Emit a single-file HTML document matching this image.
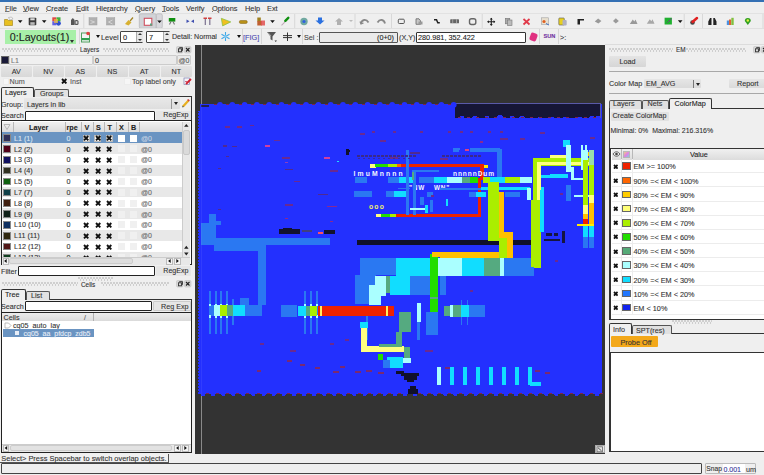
<!DOCTYPE html><html><head><meta charset="utf-8"><style>
html,body{margin:0;padding:0;}
body{width:764px;height:475px;overflow:hidden;position:relative;background:#efefef;font-family:"Liberation Sans",sans-serif;}
.t{position:absolute;white-space:pre;line-height:1;-webkit-text-stroke:0.1px currentColor;}
div{box-sizing:border-box;}
u{text-decoration-thickness:0.5px;text-underline-offset:0px;text-decoration-color:#777;}
</style></head><body>
<div style="position:absolute;left:0px;top:0px;width:764px;height:2px;background:#3470b4"></div>
<div class="t" style="left:5px;top:4.5px;font-size:7.4px;color:#333;"><u>F</u>ile</div>
<div class="t" style="left:23px;top:4.5px;font-size:7.4px;color:#333;"><u>V</u>iew</div>
<div class="t" style="left:46px;top:4.5px;font-size:7.4px;color:#333;"><u>C</u>reate</div>
<div class="t" style="left:76px;top:4.5px;font-size:7.4px;color:#333;"><u>E</u>dit</div>
<div class="t" style="left:96px;top:4.5px;font-size:7.4px;color:#333;">Hie<u>r</u>archy</div>
<div class="t" style="left:135px;top:4.5px;font-size:7.4px;color:#333;"><u>Q</u>uery</div>
<div class="t" style="left:162px;top:4.5px;font-size:7.4px;color:#333;"><u>T</u>ools</div>
<div class="t" style="left:186px;top:4.5px;font-size:7.4px;color:#333;">Verify</div>
<div class="t" style="left:212px;top:4.5px;font-size:7.4px;color:#333;"><u>O</u>ptions</div>
<div class="t" style="left:245px;top:4.5px;font-size:7.4px;color:#333;"><u>H</u>elp</div>
<div class="t" style="left:267px;top:4.5px;font-size:7.4px;color:#333;">Ext</div>
<div style="position:absolute;left:0px;top:13px;width:764px;height:1px;background:#e2e2e2"></div>
<svg style="position:absolute;left:0;top:0" width="764" height="30" viewBox="0 0 764 30"><path d="M4.5 19.5h3l1 1h4v5h-8z" fill="#e8c020" stroke="#a08010" stroke-width=".6"/><path d="M8.5 17.5l3-.5 1.5 2-3 1z" fill="#f4f4f4" stroke="#999" stroke-width=".5"/><path d="M17.9 20.3h4.6l-2.3 2.6z" fill="#111"/><rect x="28.7" y="17.7" width="7.6" height="7.6" rx=".8" fill="#3a3a3a"/><rect x="30.3" y="18.3" width="4.4" height="2" fill="#ddd"/><rect x="30.3" y="22.2" width="4.4" height="2.6" fill="#bbb"/><path d="M41.900000000000006 20.3h4.6l-2.3 2.6z" fill="#111"/><rect x="52.3" y="17.3" width="4" height="4" fill="#e04848"/><rect x="56.5" y="17.3" width="4" height="4" fill="#40b040"/><rect x="52.3" y="21.3" width="4" height="4" fill="#6060e0"/><circle cx="58.5" cy="23.3" r="2.4" fill="#3050d0"/><rect x="54" y="19" width="4" height="4" fill="#f0c040" opacity=".7"/><path d="M71 25v-5l1.8-2 1.8 2v5z" fill="#555"/><rect x="74.5" y="20" width="4" height="5" rx="1.5" fill="#555"/><rect x="75.6" y="21.2" width="1.8" height="2.6" fill="#ddd"/><rect x="83.3" y="14" width="1" height="14" fill="#d8d8d8"/><rect x="89" y="17.7" width="8" height="7.3" fill="#b0b0b0" stroke="#a0a0a0" stroke-width=".5"/><path d="M90.5 20.5l4 1.5-4 1.5" stroke="#ddd" stroke-width=".8" fill="none"/><rect x="106.5" y="17.7" width="8.3" height="7.3" fill="#b0b0b0" stroke="#a0a0a0" stroke-width=".5"/><path d="M112.5 20l-4 2 4 2" stroke="#ddd" stroke-width=".8" fill="none"/><path d="M125 24l3.5-4 3 2.5-3 3z" fill="#d8b030"/><path d="M130 21l3-3.5" stroke="#a08020" stroke-width="1.2"/><rect x="139.3" y="13.8" width="17" height="14.5" rx="1.5" fill="#d2d4d8" stroke="#b4b4b8" stroke-width=".7"/><rect x="156.3" y="13.8" width="6" height="14.5" rx="1.5" fill="#d8d8dc" stroke="#b4b4b8" stroke-width=".7"/><rect x="144.3" y="18.3" width="7.5" height="7" fill="#fff" stroke="#d05060" stroke-width="1.1"/><rect x="150" y="23.5" width="2.2" height="2.2" fill="#60a080"/><path d="M157.2 20.5h4.6l-2.3 2.6z" fill="#111"/><rect x="168.8" y="18" width="6.5" height="3.6" fill="#109010"/><path d="M169.5 24.5l1.5-3m3.5 3l-1.5-3" stroke="#777" stroke-width="1.1"/><path d="M186.5 19.5v3.5l3-1.7zM194 19.5v3.5l-3-1.7z" fill="#4050b0"/><path d="M203.5 18.3h3.5M208 18.3h3.5" stroke="#d04040" stroke-width="1.5"/><path d="M205.3 19v6M209.8 19v6" stroke="#7a7090" stroke-width="1.2"/><path d="M221.3 18.3l9.5 3.6-8.2 4z" fill="#f0c020" stroke="#80c040" stroke-width=".7"/><rect x="239.3" y="20.5" width="8" height="3" rx="1.4" fill="#b89018" stroke="#806010" stroke-width=".5"/><rect x="257.3" y="17.5" width="3.5" height="4" fill="#a08020"/><rect x="257.3" y="21" width="4.5" height="4.5" fill="#c06030"/><rect x="261" y="20.5" width="4" height="5" fill="#e05050" opacity=".85"/><path d="M270.2 20.3h4.6l-2.3 2.6z" fill="#111"/><path d="M281.5 25.3l5-5" stroke="#c0a8b8" stroke-width="1.1"/><path d="M285.3 20.8l3-3" stroke="#109010" stroke-width="2.4" stroke-linecap="round"/><rect x="294.2" y="14" width="1" height="14" fill="#d8d8d8"/><circle cx="304" cy="21.5" r="3.7" fill="#70a8a0"/><circle cx="304" cy="21.5" r="1.6" fill="#3060e0"/><path d="M318 17.5h4v3h2.5l-4.5 4-4.5-4h2.5z" fill="#2a70e0"/><path d="M339 18l4 3.5h-2v3.5h-4v-3.5h-2z" fill="#b0b0b0"/><path d="M349 20.2h4l-2 1.6z" fill="#aaa"/><rect x="354.5" y="14" width="1" height="14" fill="#d8d8d8"/><path d="M361 23.5c1-4 5-5 7.5-1" stroke="#888" stroke-width="1.8" fill="none"/><path d="M360 21.5l1 2.5 2.5-1" stroke="#888" stroke-width="1.2" fill="none"/><path d="M385 23.5c-1-4-5-5-7.5-1" stroke="#888" stroke-width="1.8" fill="none"/><rect x="391" y="14" width="1" height="14" fill="#d8d8d8"/><rect x="398.3" y="19.2" width="6" height="4.3" rx="1" fill="none" stroke="#555" stroke-width="1"/><path d="M416 24.3v-5.5h3l1.5 2v3.5z" fill="#c8c8c8" stroke="#666" stroke-width=".8"/><rect x="418.5" y="21.5" width="4" height="3" fill="#999"/><path d="M434 19.8h2.5l1.3 3h2" stroke="#222" stroke-width="1.5" fill="none"/><rect x="450.2" y="19.3" width="8.8" height="4" rx=".6" fill="#666"/><path d="M452.7 19.3v4M456.5 19.3v4" stroke="#ccc" stroke-width=".6"/><rect x="469.5" y="18.7" width="6.3" height="5.8" rx="2" fill="none" stroke="#666" stroke-width="1.4"/><rect x="481.7" y="14" width="1" height="14" fill="#d8d8d8"/><path d="M491.3 18v7.5M487.5 21.7h7.5" stroke="#222" stroke-width="1.1"/><path d="M491.3 17.8l1.5 1.7h-3zM491.3 25.7l1.5-1.7h-3zM487.3 21.7l1.7-1.5v3zM495.3 21.7l-1.7-1.5v3z" fill="#222"/><rect x="505.3" y="18.3" width="4.5" height="5.5" fill="#aaa" stroke="#777" stroke-width=".6"/><rect x="507.5" y="20" width="4.5" height="5.5" fill="#bbb" stroke="#777" stroke-width=".6"/><path d="M523.5 19l6 5.5M529.5 19l-6 5.5" stroke="#e03848" stroke-width="1.7"/><rect x="541.3" y="17.8" width="7" height="6.5" fill="#e8e0d0" stroke="#a0a0a0" stroke-width=".6"/><circle cx="544" cy="21.5" r="1.6" fill="#e06020"/><path d="M546 23.5l3 1.5" stroke="#4070c0" stroke-width="1"/><rect x="558.8" y="18" width="5.5" height="7" rx=".8" fill="#e8d020" stroke="#555" stroke-width=".6"/><rect x="562.5" y="20" width="4.2" height="5.5" rx="1" fill="#b0b0c0"/><path d="M577.5 24.5v-5.5h6.5v1.5h-4v4z" fill="#222"/><path d="M594.8 21.5l3.3-3 3.3 2.5-3 2.5z" fill="#999"/><path d="M615.8 18.2l3 2.8-3 2.5-2.8-2.5z" fill="#9a9a9a"/><path d="M629.8 24l3-4.5 1.5 2 1.2-2 2 4.5z" fill="#999"/><path d="M646.8 23.8l3-4.5 1.5 2 1.2-2 2 4.5z" fill="#a8a8a8"/><rect x="664.6" y="17.7" width="7.3" height="6.8" fill="#20b030"/><path d="M667.5 22.5l4-4" stroke="#704080" stroke-width="1"/><path d="M677.9000000000001 20.3h4.6l-2.3 2.6z" fill="#111"/><rect x="683.7" y="14" width="1" height="14" fill="#d8d8d8"/><circle cx="692.5" cy="22.5" r="2.3" fill="#444"/><path d="M692.5 22l4.5-4" stroke="#e02020" stroke-width="2.5" stroke-linecap="round"/><rect x="702" y="14" width="1" height="14" fill="#d8d8d8"/><path d="M708.3 25v-3.5l1.7-3.5h1.5v7zM716.5 25v-3.5l-1.7-3.5h-1.5v7z" fill="#222"/><rect x="726.8" y="20.5" width="2.2" height="4.5" fill="#4a90e0"/><rect x="729" y="19.5" width="2.2" height="5.5" fill="#e06030"/><rect x="731.3" y="17.8" width="2.4" height="7.2" fill="#80c040"/><path d="M747.8 25l-3-4a3 3 0 1 1 6 0z" fill="#30a020"/><circle cx="747.8" cy="20.5" r="1.2" fill="#e0f040"/><rect x="762.5" y="14" width="1" height="14" fill="#d8d8d8"/></svg>
<div style="position:absolute;left:0px;top:28px;width:764px;height:1px;background:#e0e0e0"></div>
<div style="position:absolute;left:4.5px;top:30px;width:71.5px;height:14px;background:#a8f0a8"></div>
<div class="t" style="left:9.8px;top:32px;font-size:10.7px;color:#222;">0:Layouts(1)</div>
<div style="position:absolute;left:70px;top:40px;width:0;height:0;border-left:2.5px solid transparent;border-right:2.5px solid transparent;border-top:3px solid #333"></div>
<div style="position:absolute;left:79px;top:29px;width:1px;height:15px;background:#d6d6d6"></div>
<svg style="position:absolute;left:80px;top:30px" width="12" height="14"><rect x="1.5" y="3" width="8" height="9" fill="#f4f4f4" stroke="#50a060" stroke-width="1"/><rect x="1.5" y="8" width="8" height="2.2" fill="#30a050"/><path d="M6.5 2.5h3v3" fill="#e04040"/><circle cx="8" cy="3.5" r="1.7" fill="#e04040"/></svg>
<div style="position:absolute;left:95.5px;top:35px;width:0;height:0;border-left:2.5px solid transparent;border-right:2.5px solid transparent;border-top:3px solid #111"></div>
<div class="t" style="left:101px;top:33.5px;font-size:7.4px;color:#333;">Level</div>
<div style="position:absolute;left:120px;top:31px;width:23px;height:11.5px;background:#fff;border:1px solid #444;border-radius:1px"></div>
<div class="t" style="left:123px;top:34px;font-size:7.4px;color:#222;">0</div>
<div style="position:absolute;left:135.5px;top:31.5px;width:7px;height:10.5px;background:#e6e6e6;border-left:1px solid #aaa"></div>
<div style="position:absolute;left:137.5px;top:32.5px;width:0;height:0;border-left:2px solid transparent;border-right:2px solid transparent;border-bottom:2.5px solid #333"></div>
<div style="position:absolute;left:137.5px;top:38.5px;width:0;height:0;border-left:2px solid transparent;border-right:2px solid transparent;border-top:2.5px solid #333"></div>
<div style="position:absolute;left:146px;top:31px;width:24px;height:11.5px;background:#fff;border:1px solid #444;border-radius:1px"></div>
<div class="t" style="left:149px;top:34px;font-size:7.4px;color:#222;">7</div>
<div style="position:absolute;left:162.5px;top:31.5px;width:7px;height:10.5px;background:#e6e6e6;border-left:1px solid #aaa"></div>
<div style="position:absolute;left:164.5px;top:32.5px;width:0;height:0;border-left:2px solid transparent;border-right:2px solid transparent;border-bottom:2.5px solid #333"></div>
<div style="position:absolute;left:164.5px;top:38.5px;width:0;height:0;border-left:2px solid transparent;border-right:2px solid transparent;border-top:2.5px solid #333"></div>
<div class="t" style="left:172px;top:33.5px;font-size:7.1px;color:#333;">Detail: Normal</div>
<svg style="position:absolute;left:220px;top:31px" width="11" height="11"><path d="M5.5 1v9M1.5 3.2l8 4.6M1.5 7.8l8-4.6" stroke="#40a8e8" stroke-width="1.1"/><circle cx="5.5" cy="5.5" r="1.5" fill="#80c8f0"/></svg>
<div style="position:absolute;left:236.5px;top:35px;width:0;height:0;border-left:2.5px solid transparent;border-right:2.5px solid transparent;border-top:3px solid #111"></div>
<div style="position:absolute;left:242px;top:29px;width:1px;height:15px;background:#d6d6d6"></div>
<div class="t" style="left:243px;top:33.5px;font-size:7.3px;color:#4848b0;">[FIG]</div>
<div style="position:absolute;left:261px;top:29px;width:1px;height:15px;background:#d6d6d6"></div>
<svg style="position:absolute;left:264px;top:29px" width="40" height="16"><path d="M3 3h9l-3.5 4.5v4l-2-1.2v-2.8z" fill="#555"/><path d="M4 3.5l3 3.5" stroke="#ddd" stroke-width=".6"/><path d="M10.5 11.5h2.5l-1.25 1.5z" fill="#333"/><path d="M23.5 3.5v8.5M19 6.6h9M19 8.6h9" stroke="#333" stroke-width="1"/></svg>
<div style="position:absolute;left:297px;top:35px;width:0;height:0;border-left:2.5px solid transparent;border-right:2.5px solid transparent;border-top:3px solid #111"></div>
<div style="position:absolute;left:302px;top:29px;width:1px;height:15px;background:#d6d6d6"></div>
<div class="t" style="left:304px;top:33.5px;font-size:7.2px;color:#444;">Sel :</div>
<div style="position:absolute;left:319px;top:31.5px;width:79px;height:11px;background:#eaeaea;border:1px solid #555;border-radius:1px"></div>
<div class="t" style="left:377px;top:34px;font-size:7.2px;color:#222;">(0+0)</div>
<div class="t" style="left:399px;top:34px;font-size:7.2px;color:#333;">(X,Y)</div>
<div style="position:absolute;left:415.5px;top:31.5px;width:110px;height:11px;background:#fff;border:1.3px solid #333;border-radius:1px"></div>
<div class="t" style="left:418px;top:34px;font-size:7.3px;color:#222;">280.981, 352.422</div>
<div style="position:absolute;left:530px;top:33px;width:7px;height:8px;background:#e03080;border-radius:2px;transform:rotate(20deg)"></div>
<div style="position:absolute;left:539px;top:29px;width:1px;height:15px;background:#d6d6d6"></div>
<div class="t" style="left:543.5px;top:34px;font-size:5.6px;color:#7030a0;font-weight:bold">SUN</div>
<div style="position:absolute;left:558px;top:29px;width:1px;height:15px;background:#d6d6d6"></div>
<div class="t" style="left:560px;top:34px;font-size:7.3px;color:#333;">>:</div>
<div style="position:absolute;left:2px;top:47.5px;width:75px;height:4px;background-image:radial-gradient(circle at 1px 1px,#cecece 0.7px,transparent 1px),radial-gradient(circle at 2.5px 2.8px,#cecece 0.7px,transparent 1px);background-size:3px 4px"></div>
<div class="t" style="left:80px;top:46.8px;font-size:6.4px;color:#333;">Layers</div>
<div style="position:absolute;left:102.8px;top:47.5px;width:66.39999999999999px;height:4px;background-image:radial-gradient(circle at 1px 1px,#cecece 0.7px,transparent 1px),radial-gradient(circle at 2.5px 2.8px,#cecece 0.7px,transparent 1px);background-size:3px 4px"></div>
<svg style="position:absolute;left:175.7px;top:45.5px" width="16" height="8"><rect x="0.5" y="0.5" width="6.5" height="6.5" rx="1.2" fill="#d8d8d8" stroke="#c0c0c0" stroke-width=".6"/><rect x="8.5" y="0.5" width="6.5" height="6.5" rx="1.2" fill="#d8d8d8" stroke="#c0c0c0" stroke-width=".6"/><rect x="2.5" y="2.8" width="3" height="3" fill="none" stroke="#333" stroke-width=".9"/><path d="M3.5 2.2v-.6h3v3h-.6" fill="none" stroke="#333" stroke-width=".9"/><path d="M10 2l3.5 3.5M13.5 2l-3.5 3.5" stroke="#222" stroke-width="1.1"/></svg>
<div style="position:absolute;left:1px;top:55.5px;width:8px;height:8px;background:#1a1a38;border:1px solid #666"></div>
<div style="position:absolute;left:9px;top:55px;width:84px;height:9.5px;background:#f0f0f0;border:1px solid #d0d0d0;border-radius:1px"></div>
<div class="t" style="left:11px;top:57px;font-size:7px;color:#777;">L1</div>
<div style="position:absolute;left:93px;top:55px;width:84px;height:9.5px;background:#eaeaea;border:1px solid #ccc;border-radius:1px"></div>
<div class="t" style="left:95px;top:57px;font-size:7.2px;color:#333;">0</div>
<div style="position:absolute;left:177px;top:55px;width:14px;height:9.5px;background:#eaeaea;border:1px solid #ccc;border-radius:1px"></div>
<div class="t" style="left:178.5px;top:57px;font-size:7px;color:#555;">@0</div>
<div style="position:absolute;left:1px;top:66px;width:30.5px;height:10.5px;background:linear-gradient(#e4e4e4,#d8d8d8);border-radius:1px"></div>
<div class="t" style="left:16.25px;top:68.2px;font-size:7.2px;color:#333;transform:translateX(-50%)">AV</div>
<div style="position:absolute;left:33px;top:66px;width:30.5px;height:10.5px;background:linear-gradient(#e4e4e4,#d8d8d8);border-radius:1px"></div>
<div class="t" style="left:48.25px;top:68.2px;font-size:7.2px;color:#333;transform:translateX(-50%)">NV</div>
<div style="position:absolute;left:65px;top:66px;width:30.5px;height:10.5px;background:linear-gradient(#e4e4e4,#d8d8d8);border-radius:1px"></div>
<div class="t" style="left:80.25px;top:68.2px;font-size:7.2px;color:#333;transform:translateX(-50%)">AS</div>
<div style="position:absolute;left:97px;top:66px;width:30.5px;height:10.5px;background:linear-gradient(#e4e4e4,#d8d8d8);border-radius:1px"></div>
<div class="t" style="left:112.25px;top:68.2px;font-size:7.2px;color:#333;transform:translateX(-50%)">NS</div>
<div style="position:absolute;left:129px;top:66px;width:30.5px;height:10.5px;background:linear-gradient(#e4e4e4,#d8d8d8);border-radius:1px"></div>
<div class="t" style="left:144.25px;top:68.2px;font-size:7.2px;color:#333;transform:translateX(-50%)">AT</div>
<div style="position:absolute;left:161px;top:66px;width:30.5px;height:10.5px;background:linear-gradient(#e4e4e4,#d8d8d8);border-radius:1px"></div>
<div class="t" style="left:176.25px;top:68.2px;font-size:7.2px;color:#333;transform:translateX(-50%)">NT</div>
<div style="position:absolute;left:2.5px;top:78px;width:6.5px;height:6.5px;background:#f6f6f6;border:1px solid #ececec"></div>
<div class="t" style="left:9.5px;top:78px;font-size:7.2px;color:#555;">Num</div>
<svg style="position:absolute;left:61.3px;top:78.1px" width="6.4" height="6.4"><path d="M1 1L5.4 5.4M5.4 1L1 5.4" stroke="#111" stroke-width="1.9"/></svg>
<div class="t" style="left:70px;top:78px;font-size:7.2px;color:#555;">Inst</div>
<div style="position:absolute;left:124px;top:78px;width:6.5px;height:6.5px;background:#f6f6f6;border:1px solid #ececec"></div>
<div class="t" style="left:132px;top:78px;font-size:7.2px;color:#444;">Top label only</div>
<svg style="position:absolute;left:183px;top:77px" width="10" height="9"><rect x="1" y="1" width="5.5" height="6.5" fill="#f4f4f8" stroke="#8080b0" stroke-width=".7"/><path d="M3 7l5-5" stroke="#d02030" stroke-width="1.8"/><path d="M2 4.5h2" stroke="#c04060" stroke-width=".8"/></svg>
<div style="position:absolute;left:1px;top:96px;width:191px;height:1.3px;background:#333"></div>
<div style="position:absolute;left:34px;top:88.5px;width:35px;height:8px;background:#e2e2e2;border:1px solid #555;border-bottom:none;border-radius:2px 2px 0 0"></div>
<div class="t" style="left:40px;top:89.5px;font-size:7.2px;color:#333;">Groups</div>
<div style="position:absolute;left:1px;top:86.5px;width:33px;height:10.5px;background:#efefef;border:1.3px solid #333;border-bottom:none;border-radius:2px 2px 0 0"></div>
<div class="t" style="left:5px;top:89px;font-size:7.2px;color:#222;">Layers</div>
<div style="position:absolute;left:1px;top:96px;width:1.3px;height:25px;background:#333"></div>
<div style="position:absolute;left:190.5px;top:96px;width:1.3px;height:25px;background:#333"></div>
<div class="t" style="left:1px;top:100.5px;font-size:7.2px;color:#333;">Group:</div>
<div style="position:absolute;left:24px;top:98px;width:156px;height:11px;background:linear-gradient(#e8e8e8,#dedede);border-radius:1px"></div>
<div class="t" style="left:27px;top:100.5px;font-size:7.2px;color:#333;">Layers in lib</div>
<div style="position:absolute;left:171.3px;top:98.5px;width:1.2px;height:10px;background:#999"></div>
<div style="position:absolute;left:174px;top:102.3px;width:0;height:0;border-left:2.5px solid transparent;border-right:2.5px solid transparent;border-top:3px solid #222"></div>
<svg style="position:absolute;left:180px;top:97px" width="12" height="12"><path d="M3 9.5l5.5-6" stroke="#e8b020" stroke-width="2.2"/><path d="M8 3.8l1-1.2" stroke="#d04040" stroke-width="2.2"/><path d="M2.5 10.3l.8-1.3" stroke="#555" stroke-width="1.2"/></svg>
<div class="t" style="left:1px;top:112px;font-size:7.2px;color:#333;">Search</div>
<div style="position:absolute;left:25px;top:110.5px;width:129.5px;height:10px;background:#fff;border:1.3px solid #222;border-radius:1px"></div>
<div style="position:absolute;left:156px;top:110.5px;width:35px;height:10px;background:#e6e6e6;border-radius:1px"></div>
<div class="t" style="left:163.3px;top:112px;font-size:7.1px;color:#333;">RegExp</div>
<div style="position:absolute;left:1px;top:120.3px;width:190.5px;height:145px;background:#fff;border:1.3px solid #222;border-right-width:1px"></div>
<div style="position:absolute;left:2.3px;top:121.5px;width:180px;height:10.5px;background:linear-gradient(#f0f0f0,#dcdcdc)"></div>
<div style="position:absolute;left:13px;top:122px;width:1px;height:10px;background:#b8b8b8"></div>
<div style="position:absolute;left:65px;top:122px;width:1px;height:10px;background:#b8b8b8"></div>
<div style="position:absolute;left:81px;top:122px;width:1px;height:10px;background:#b8b8b8"></div>
<div style="position:absolute;left:92.5px;top:122px;width:1px;height:10px;background:#b8b8b8"></div>
<div style="position:absolute;left:104px;top:122px;width:1px;height:10px;background:#b8b8b8"></div>
<div style="position:absolute;left:116px;top:122px;width:1px;height:10px;background:#b8b8b8"></div>
<div style="position:absolute;left:128px;top:122px;width:1px;height:10px;background:#b8b8b8"></div>
<div style="position:absolute;left:139px;top:122px;width:1px;height:10px;background:#b8b8b8"></div>
<svg style="position:absolute;left:3px;top:123px" width="8" height="8"><path d="M1 1.5h6l-3 5z" fill="none" stroke="#aaa" stroke-width=".8"/></svg>
<div class="t" style="left:29px;top:123.8px;font-size:7.2px;color:#222;font-weight:bold">Layer</div>
<div class="t" style="left:66.5px;top:123.8px;font-size:7.2px;color:#222;font-weight:bold">rpe</div>
<div class="t" style="left:84.5px;top:123.8px;font-size:7.2px;color:#222;font-weight:bold">V</div>
<div class="t" style="left:96px;top:123.8px;font-size:7.2px;color:#222;font-weight:bold">S</div>
<div class="t" style="left:107.5px;top:123.8px;font-size:7.2px;color:#222;font-weight:bold">T</div>
<div class="t" style="left:119px;top:123.8px;font-size:7.2px;color:#222;font-weight:bold">X</div>
<div class="t" style="left:131px;top:123.8px;font-size:7.2px;color:#222;font-weight:bold">B</div>
<div style="position:absolute;left:2.3px;top:132.4px;width:180px;height:124.6px;overflow:hidden">
<div style="position:absolute;left:0px;top:0.0px;width:180px;height:10.85px;background:#6a94c2"><div style="position:absolute;left:1px;top:2px;width:8px;height:7.5px;background:#303058;border:1px solid #888"></div></div>
<div class="t" style="left:11.7px;top:2.3px;font-size:7.2px;color:#dde6f2;">L1 (1)</div>
<div class="t" style="left:64.2px;top:2.3px;font-size:7.2px;color:#dde6f2;">0</div>
<div style="position:absolute;left:80.4px;top:2.2px;width:7.2px;height:7px;background:#fff;border:1px solid #bbb"></div>
<svg style="position:absolute;left:80.75px;top:2.85px" width="6.3" height="6.3"><path d="M1 1L5.3 5.3M5.3 1L1 5.3" stroke="#111" stroke-width="1.9"/></svg>
<div style="position:absolute;left:91.9px;top:2.2px;width:7.2px;height:7px;background:#fff;border:1px solid #bbb"></div>
<svg style="position:absolute;left:92.25px;top:2.85px" width="6.3" height="6.3"><path d="M1 1L5.3 5.3M5.3 1L1 5.3" stroke="#111" stroke-width="1.9"/></svg>
<div style="position:absolute;left:103.4px;top:2.2px;width:7.2px;height:7px;background:#fff;border:1px solid #bbb"></div>
<svg style="position:absolute;left:103.75px;top:2.85px" width="6.3" height="6.3"><path d="M1 1L5.3 5.3M5.3 1L1 5.3" stroke="#111" stroke-width="1.9"/></svg>
<div style="position:absolute;left:115.5px;top:2.2px;width:7px;height:7px;background:#fff"></div>
<div style="position:absolute;left:127.49999999999999px;top:2.2px;width:7px;height:7px;background:#fff"></div>
<div class="t" style="left:138.7px;top:2.3px;font-size:7px;color:#c8d4e4;">@0</div>
<div style="position:absolute;left:0px;top:10.85px;width:180px;height:10.85px;background:#e8e8e8"><div style="position:absolute;left:1px;top:2px;width:8px;height:7.5px;background:#500018;border:1px solid #888"></div></div>
<div class="t" style="left:11.7px;top:13.149999999999999px;font-size:7.2px;color:#333;">L2 (2)</div>
<div class="t" style="left:64.2px;top:13.149999999999999px;font-size:7.2px;color:#333;">0</div>
<svg style="position:absolute;left:80.75px;top:13.700000000000001px" width="6.3" height="6.3"><path d="M1 1L5.3 5.3M5.3 1L1 5.3" stroke="#111" stroke-width="1.9"/></svg>
<svg style="position:absolute;left:92.25px;top:13.700000000000001px" width="6.3" height="6.3"><path d="M1 1L5.3 5.3M5.3 1L1 5.3" stroke="#111" stroke-width="1.9"/></svg>
<svg style="position:absolute;left:103.75px;top:13.700000000000001px" width="6.3" height="6.3"><path d="M1 1L5.3 5.3M5.3 1L1 5.3" stroke="#111" stroke-width="1.9"/></svg>
<div style="position:absolute;left:115.5px;top:13.05px;width:7px;height:7px;background:#f0f0f0"></div>
<div style="position:absolute;left:127.49999999999999px;top:13.05px;width:7px;height:7px;background:#f0f0f0"></div>
<div class="t" style="left:138.7px;top:13.149999999999999px;font-size:7px;color:#666;">@0</div>
<div style="position:absolute;left:0px;top:21.7px;width:180px;height:10.85px;background:#ffffff"><div style="position:absolute;left:1px;top:2px;width:8px;height:7.5px;background:#101060;border:1px solid #888"></div></div>
<div class="t" style="left:11.7px;top:24.0px;font-size:7.2px;color:#333;">L3 (3)</div>
<div class="t" style="left:64.2px;top:24.0px;font-size:7.2px;color:#333;">0</div>
<svg style="position:absolute;left:80.75px;top:24.55px" width="6.3" height="6.3"><path d="M1 1L5.3 5.3M5.3 1L1 5.3" stroke="#111" stroke-width="1.9"/></svg>
<svg style="position:absolute;left:92.25px;top:24.55px" width="6.3" height="6.3"><path d="M1 1L5.3 5.3M5.3 1L1 5.3" stroke="#111" stroke-width="1.9"/></svg>
<svg style="position:absolute;left:103.75px;top:24.55px" width="6.3" height="6.3"><path d="M1 1L5.3 5.3M5.3 1L1 5.3" stroke="#111" stroke-width="1.9"/></svg>
<div style="position:absolute;left:115.5px;top:23.9px;width:7px;height:7px;background:#f0f0f0"></div>
<div style="position:absolute;left:127.49999999999999px;top:23.9px;width:7px;height:7px;background:#f0f0f0"></div>
<div class="t" style="left:138.7px;top:24.0px;font-size:7px;color:#666;">@0</div>
<div style="position:absolute;left:0px;top:32.55px;width:180px;height:10.85px;background:#e8e8e8"><div style="position:absolute;left:1px;top:2px;width:8px;height:7.5px;background:#303020;border:1px solid #888"></div></div>
<div class="t" style="left:11.7px;top:34.849999999999994px;font-size:7.2px;color:#333;">L4 (4)</div>
<div class="t" style="left:64.2px;top:34.849999999999994px;font-size:7.2px;color:#333;">0</div>
<svg style="position:absolute;left:80.75px;top:35.4px" width="6.3" height="6.3"><path d="M1 1L5.3 5.3M5.3 1L1 5.3" stroke="#111" stroke-width="1.9"/></svg>
<svg style="position:absolute;left:92.25px;top:35.4px" width="6.3" height="6.3"><path d="M1 1L5.3 5.3M5.3 1L1 5.3" stroke="#111" stroke-width="1.9"/></svg>
<svg style="position:absolute;left:103.75px;top:35.4px" width="6.3" height="6.3"><path d="M1 1L5.3 5.3M5.3 1L1 5.3" stroke="#111" stroke-width="1.9"/></svg>
<div style="position:absolute;left:115.5px;top:34.75px;width:7px;height:7px;background:#f0f0f0"></div>
<div style="position:absolute;left:127.49999999999999px;top:34.75px;width:7px;height:7px;background:#f0f0f0"></div>
<div class="t" style="left:138.7px;top:34.849999999999994px;font-size:7px;color:#666;">@0</div>
<div style="position:absolute;left:0px;top:43.4px;width:180px;height:10.85px;background:#ffffff"><div style="position:absolute;left:1px;top:2px;width:8px;height:7.5px;background:#106010;border:1px solid #888"></div></div>
<div class="t" style="left:11.7px;top:45.699999999999996px;font-size:7.2px;color:#333;">L5 (5)</div>
<div class="t" style="left:64.2px;top:45.699999999999996px;font-size:7.2px;color:#333;">0</div>
<svg style="position:absolute;left:80.75px;top:46.25px" width="6.3" height="6.3"><path d="M1 1L5.3 5.3M5.3 1L1 5.3" stroke="#111" stroke-width="1.9"/></svg>
<svg style="position:absolute;left:92.25px;top:46.25px" width="6.3" height="6.3"><path d="M1 1L5.3 5.3M5.3 1L1 5.3" stroke="#111" stroke-width="1.9"/></svg>
<svg style="position:absolute;left:103.75px;top:46.25px" width="6.3" height="6.3"><path d="M1 1L5.3 5.3M5.3 1L1 5.3" stroke="#111" stroke-width="1.9"/></svg>
<div style="position:absolute;left:115.5px;top:45.6px;width:7px;height:7px;background:#f0f0f0"></div>
<div style="position:absolute;left:127.49999999999999px;top:45.6px;width:7px;height:7px;background:#f0f0f0"></div>
<div class="t" style="left:138.7px;top:45.699999999999996px;font-size:7px;color:#666;">@0</div>
<div style="position:absolute;left:0px;top:54.25px;width:180px;height:10.85px;background:#e8e8e8"><div style="position:absolute;left:1px;top:2px;width:8px;height:7.5px;background:#104048;border:1px solid #888"></div></div>
<div class="t" style="left:11.7px;top:56.55px;font-size:7.2px;color:#333;">L7 (7)</div>
<div class="t" style="left:64.2px;top:56.55px;font-size:7.2px;color:#333;">0</div>
<svg style="position:absolute;left:80.75px;top:57.1px" width="6.3" height="6.3"><path d="M1 1L5.3 5.3M5.3 1L1 5.3" stroke="#111" stroke-width="1.9"/></svg>
<svg style="position:absolute;left:92.25px;top:57.1px" width="6.3" height="6.3"><path d="M1 1L5.3 5.3M5.3 1L1 5.3" stroke="#111" stroke-width="1.9"/></svg>
<svg style="position:absolute;left:103.75px;top:57.1px" width="6.3" height="6.3"><path d="M1 1L5.3 5.3M5.3 1L1 5.3" stroke="#111" stroke-width="1.9"/></svg>
<div style="position:absolute;left:115.5px;top:56.45px;width:7px;height:7px;background:#f0f0f0"></div>
<div style="position:absolute;left:127.49999999999999px;top:56.45px;width:7px;height:7px;background:#f0f0f0"></div>
<div class="t" style="left:138.7px;top:56.55px;font-size:7px;color:#666;">@0</div>
<div style="position:absolute;left:0px;top:65.1px;width:180px;height:10.85px;background:#ffffff"><div style="position:absolute;left:1px;top:2px;width:8px;height:7.5px;background:#402010;border:1px solid #888"></div></div>
<div class="t" style="left:11.7px;top:67.39999999999999px;font-size:7.2px;color:#333;">L8 (8)</div>
<div class="t" style="left:64.2px;top:67.39999999999999px;font-size:7.2px;color:#333;">0</div>
<svg style="position:absolute;left:80.75px;top:67.94999999999999px" width="6.3" height="6.3"><path d="M1 1L5.3 5.3M5.3 1L1 5.3" stroke="#111" stroke-width="1.9"/></svg>
<svg style="position:absolute;left:92.25px;top:67.94999999999999px" width="6.3" height="6.3"><path d="M1 1L5.3 5.3M5.3 1L1 5.3" stroke="#111" stroke-width="1.9"/></svg>
<svg style="position:absolute;left:103.75px;top:67.94999999999999px" width="6.3" height="6.3"><path d="M1 1L5.3 5.3M5.3 1L1 5.3" stroke="#111" stroke-width="1.9"/></svg>
<div style="position:absolute;left:115.5px;top:67.3px;width:7px;height:7px;background:#f0f0f0"></div>
<div style="position:absolute;left:127.49999999999999px;top:67.3px;width:7px;height:7px;background:#f0f0f0"></div>
<div class="t" style="left:138.7px;top:67.39999999999999px;font-size:7px;color:#666;">@0</div>
<div style="position:absolute;left:0px;top:75.95px;width:180px;height:10.85px;background:#e8e8e8"><div style="position:absolute;left:1px;top:2px;width:8px;height:7.5px;background:#102018;border:1px solid #888"></div></div>
<div class="t" style="left:11.7px;top:78.25px;font-size:7.2px;color:#333;">L9 (9)</div>
<div class="t" style="left:64.2px;top:78.25px;font-size:7.2px;color:#333;">0</div>
<svg style="position:absolute;left:80.75px;top:78.8px" width="6.3" height="6.3"><path d="M1 1L5.3 5.3M5.3 1L1 5.3" stroke="#111" stroke-width="1.9"/></svg>
<svg style="position:absolute;left:92.25px;top:78.8px" width="6.3" height="6.3"><path d="M1 1L5.3 5.3M5.3 1L1 5.3" stroke="#111" stroke-width="1.9"/></svg>
<svg style="position:absolute;left:103.75px;top:78.8px" width="6.3" height="6.3"><path d="M1 1L5.3 5.3M5.3 1L1 5.3" stroke="#111" stroke-width="1.9"/></svg>
<div style="position:absolute;left:115.5px;top:78.15px;width:7px;height:7px;background:#f0f0f0"></div>
<div style="position:absolute;left:127.49999999999999px;top:78.15px;width:7px;height:7px;background:#f0f0f0"></div>
<div class="t" style="left:138.7px;top:78.25px;font-size:7px;color:#666;">@0</div>
<div style="position:absolute;left:0px;top:86.8px;width:180px;height:10.85px;background:#ffffff"><div style="position:absolute;left:1px;top:2px;width:8px;height:7.5px;background:#103060;border:1px solid #888"></div></div>
<div class="t" style="left:11.7px;top:89.1px;font-size:7.2px;color:#333;">L10 (10)</div>
<div class="t" style="left:64.2px;top:89.1px;font-size:7.2px;color:#333;">0</div>
<svg style="position:absolute;left:80.75px;top:89.64999999999999px" width="6.3" height="6.3"><path d="M1 1L5.3 5.3M5.3 1L1 5.3" stroke="#111" stroke-width="1.9"/></svg>
<svg style="position:absolute;left:92.25px;top:89.64999999999999px" width="6.3" height="6.3"><path d="M1 1L5.3 5.3M5.3 1L1 5.3" stroke="#111" stroke-width="1.9"/></svg>
<svg style="position:absolute;left:103.75px;top:89.64999999999999px" width="6.3" height="6.3"><path d="M1 1L5.3 5.3M5.3 1L1 5.3" stroke="#111" stroke-width="1.9"/></svg>
<div style="position:absolute;left:115.5px;top:89.0px;width:7px;height:7px;background:#f0f0f0"></div>
<div style="position:absolute;left:127.49999999999999px;top:89.0px;width:7px;height:7px;background:#f0f0f0"></div>
<div class="t" style="left:138.7px;top:89.1px;font-size:7px;color:#666;">@0</div>
<div style="position:absolute;left:0px;top:97.64999999999999px;width:180px;height:10.85px;background:#e8e8e8"><div style="position:absolute;left:1px;top:2px;width:8px;height:7.5px;background:#302810;border:1px solid #888"></div></div>
<div class="t" style="left:11.7px;top:99.94999999999999px;font-size:7.2px;color:#333;">L11 (11)</div>
<div class="t" style="left:64.2px;top:99.94999999999999px;font-size:7.2px;color:#333;">0</div>
<svg style="position:absolute;left:80.75px;top:100.49999999999999px" width="6.3" height="6.3"><path d="M1 1L5.3 5.3M5.3 1L1 5.3" stroke="#111" stroke-width="1.9"/></svg>
<svg style="position:absolute;left:92.25px;top:100.49999999999999px" width="6.3" height="6.3"><path d="M1 1L5.3 5.3M5.3 1L1 5.3" stroke="#111" stroke-width="1.9"/></svg>
<svg style="position:absolute;left:103.75px;top:100.49999999999999px" width="6.3" height="6.3"><path d="M1 1L5.3 5.3M5.3 1L1 5.3" stroke="#111" stroke-width="1.9"/></svg>
<div style="position:absolute;left:115.5px;top:99.85px;width:7px;height:7px;background:#f0f0f0"></div>
<div style="position:absolute;left:127.49999999999999px;top:99.85px;width:7px;height:7px;background:#f0f0f0"></div>
<div class="t" style="left:138.7px;top:99.94999999999999px;font-size:7px;color:#666;">@0</div>
<div style="position:absolute;left:0px;top:108.5px;width:180px;height:10.85px;background:#ffffff"><div style="position:absolute;left:1px;top:2px;width:8px;height:7.5px;background:#501818;border:1px solid #888"></div></div>
<div class="t" style="left:11.7px;top:110.8px;font-size:7.2px;color:#333;">L12 (12)</div>
<div class="t" style="left:64.2px;top:110.8px;font-size:7.2px;color:#333;">0</div>
<svg style="position:absolute;left:80.75px;top:111.35px" width="6.3" height="6.3"><path d="M1 1L5.3 5.3M5.3 1L1 5.3" stroke="#111" stroke-width="1.9"/></svg>
<svg style="position:absolute;left:92.25px;top:111.35px" width="6.3" height="6.3"><path d="M1 1L5.3 5.3M5.3 1L1 5.3" stroke="#111" stroke-width="1.9"/></svg>
<svg style="position:absolute;left:103.75px;top:111.35px" width="6.3" height="6.3"><path d="M1 1L5.3 5.3M5.3 1L1 5.3" stroke="#111" stroke-width="1.9"/></svg>
<div style="position:absolute;left:115.5px;top:110.7px;width:7px;height:7px;background:#f0f0f0"></div>
<div style="position:absolute;left:127.49999999999999px;top:110.7px;width:7px;height:7px;background:#f0f0f0"></div>
<div class="t" style="left:138.7px;top:110.8px;font-size:7px;color:#666;">@0</div>
<div style="position:absolute;left:0px;top:119.35px;width:180px;height:10.85px;background:#e8e8e8"><div style="position:absolute;left:1px;top:2px;width:8px;height:7.5px;background:#104020;border:1px solid #888"></div></div>
<div class="t" style="left:11.7px;top:121.64999999999999px;font-size:7.2px;color:#333;">L13 (13)</div>
<div class="t" style="left:64.2px;top:121.64999999999999px;font-size:7.2px;color:#333;">0</div>
<svg style="position:absolute;left:80.75px;top:122.19999999999999px" width="6.3" height="6.3"><path d="M1 1L5.3 5.3M5.3 1L1 5.3" stroke="#111" stroke-width="1.9"/></svg>
<svg style="position:absolute;left:92.25px;top:122.19999999999999px" width="6.3" height="6.3"><path d="M1 1L5.3 5.3M5.3 1L1 5.3" stroke="#111" stroke-width="1.9"/></svg>
<svg style="position:absolute;left:103.75px;top:122.19999999999999px" width="6.3" height="6.3"><path d="M1 1L5.3 5.3M5.3 1L1 5.3" stroke="#111" stroke-width="1.9"/></svg>
<div style="position:absolute;left:115.5px;top:121.55px;width:7px;height:7px;background:#f0f0f0"></div>
<div style="position:absolute;left:127.49999999999999px;top:121.55px;width:7px;height:7px;background:#f0f0f0"></div>
<div class="t" style="left:138.7px;top:121.64999999999999px;font-size:7px;color:#666;">@0</div>
</div>
<div style="position:absolute;left:182.3px;top:121.5px;width:8px;height:136px;background:#e8e8e8;border-left:1px solid #ccc"></div>
<div style="position:absolute;left:183px;top:130px;width:7px;height:25px;background:#dadada;border:1px solid #c8c8c8;border-radius:2px"></div>
<svg style="position:absolute;left:0;top:0;overflow:visible" width="1" height="1"><path d="M184.05 126.85L188.55 126.85L186.3 123.925z" fill="#222"/></svg>
<svg style="position:absolute;left:0;top:0;overflow:visible" width="1" height="1"><path d="M184.05 248.65L188.55 248.65L186.3 245.72500000000002z" fill="#222"/></svg>
<svg style="position:absolute;left:0;top:0;overflow:visible" width="1" height="1"><path d="M184.05 252.45000000000002L188.55 252.45000000000002L186.3 255.375z" fill="#222"/></svg>
<div style="position:absolute;left:2.3px;top:257px;width:188px;height:7.5px;background:#e8e8e8;border-top:1px solid #ccc"></div>
<div style="position:absolute;left:2.5px;top:257.5px;width:6px;height:7px;background:#f4f4f4;border:1px solid #bbb"></div>
<svg style="position:absolute;left:0;top:0;overflow:visible" width="1" height="1"><path d="M6.7 259.0L6.7 263.0L4.1 261z" fill="#111"/></svg>
<div style="position:absolute;left:9px;top:258px;width:124px;height:6px;background:#dedede;border:1px solid #ccc;border-radius:2px"></div>
<div style="position:absolute;left:166px;top:257.5px;width:7px;height:7px;background:#f4f4f4;border:1px solid #bbb"></div>
<div style="position:absolute;left:174px;top:257.5px;width:7px;height:7px;background:#f4f4f4;border:1px solid #bbb"></div>
<svg style="position:absolute;left:0;top:0;overflow:visible" width="1" height="1"><path d="M170.7 259.0L170.7 263.0L168.1 261z" fill="#111"/></svg>
<svg style="position:absolute;left:0;top:0;overflow:visible" width="1" height="1"><path d="M176.3 259.0L176.3 263.0L178.9 261z" fill="#111"/></svg>
<div class="t" style="left:1px;top:268px;font-size:7.2px;color:#333;">Filter</div>
<div style="position:absolute;left:18px;top:265.5px;width:136.5px;height:10.5px;background:#fff;border:1.3px solid #222;border-radius:1px"></div>
<div style="position:absolute;left:156px;top:266px;width:35px;height:10px;background:#e6e6e6;border-radius:1px"></div>
<div class="t" style="left:163.3px;top:268px;font-size:7.1px;color:#333;">RegExp</div>
<div style="position:absolute;left:78px;top:276.5px;width:35px;height:4px;background-image:radial-gradient(circle at 1px 1px,#cecece 0.7px,transparent 1px),radial-gradient(circle at 2.5px 2.8px,#cecece 0.7px,transparent 1px);background-size:3px 4px"></div>
<div style="position:absolute;left:2px;top:282.2px;width:76px;height:4px;background-image:radial-gradient(circle at 1px 1px,#cecece 0.7px,transparent 1px),radial-gradient(circle at 2.5px 2.8px,#cecece 0.7px,transparent 1px);background-size:3px 4px"></div>
<div class="t" style="left:81px;top:281.5px;font-size:6.4px;color:#333;">Cells</div>
<div style="position:absolute;left:100.5px;top:282.2px;width:68.69999999999999px;height:4px;background-image:radial-gradient(circle at 1px 1px,#cecece 0.7px,transparent 1px),radial-gradient(circle at 2.5px 2.8px,#cecece 0.7px,transparent 1px);background-size:3px 4px"></div>
<svg style="position:absolute;left:175.7px;top:280.2px" width="16" height="8"><rect x="0.5" y="0.5" width="6.5" height="6.5" rx="1.2" fill="#d8d8d8" stroke="#c0c0c0" stroke-width=".6"/><rect x="8.5" y="0.5" width="6.5" height="6.5" rx="1.2" fill="#d8d8d8" stroke="#c0c0c0" stroke-width=".6"/><rect x="2.5" y="2.8" width="3" height="3" fill="none" stroke="#333" stroke-width=".9"/><path d="M3.5 2.2v-.6h3v3h-.6" fill="none" stroke="#333" stroke-width=".9"/><path d="M10 2l3.5 3.5M13.5 2l-3.5 3.5" stroke="#222" stroke-width="1.1"/></svg>
<div style="position:absolute;left:1px;top:299px;width:191px;height:1.3px;background:#333"></div>
<div style="position:absolute;left:26px;top:290.5px;width:24px;height:9px;background:#e2e2e2;border:1px solid #555;border-bottom:none;border-radius:2px 2px 0 0"></div>
<div class="t" style="left:31px;top:292px;font-size:7.2px;color:#333;">List</div>
<div style="position:absolute;left:1px;top:288.5px;width:25px;height:11.5px;background:#efefef;border:1.3px solid #333;border-bottom:none;border-radius:2px 2px 0 0"></div>
<div class="t" style="left:5px;top:291px;font-size:7.2px;color:#222;">Tree</div>
<div style="position:absolute;left:1px;top:299px;width:1.3px;height:154px;background:#333"></div>
<div style="position:absolute;left:190.5px;top:299px;width:1.3px;height:13px;background:#333"></div>
<div class="t" style="left:1px;top:303px;font-size:7.2px;color:#333;">Search</div>
<div style="position:absolute;left:25px;top:300.5px;width:127px;height:10px;background:#fff;border:1.3px solid #222;border-radius:1px"></div>
<div style="position:absolute;left:153px;top:300.5px;width:38px;height:10px;background:#e6e6e6;border:1px solid #ccc;border-radius:1px"></div>
<div class="t" style="left:161px;top:303px;font-size:7.2px;color:#333;">Reg Exp</div>
<div style="position:absolute;left:1px;top:311.5px;width:191px;height:141.5px;background:#fff;border:1.3px solid #222"></div>
<div style="position:absolute;left:2.3px;top:312.8px;width:188.5px;height:8.5px;background:linear-gradient(#ececec,#dadada)"></div>
<div style="position:absolute;left:93px;top:313px;width:1px;height:8px;background:#b0b0b0"></div>
<div class="t" style="left:3.5px;top:314px;font-size:7.2px;color:#333;">Cells</div>
<div class="t" style="left:84px;top:313.5px;font-size:7px;color:#555;">/</div>
<svg style="position:absolute;left:4px;top:322px" width="8" height="7"><path d="M1 1h3.5l2.5 2.5-2.5 2.5h-3.5z" fill="none" stroke="#aaa" stroke-width=".8"/></svg>
<div class="t" style="left:13px;top:322.2px;font-size:7.2px;color:#333;">cq05_auto_lay</div>
<div style="position:absolute;left:3px;top:329px;width:90.5px;height:7.5px;background:#6a94c2"></div>
<div style="position:absolute;left:15px;top:330.8px;width:4px;height:4px;background:#e8eef8"></div>
<div class="t" style="left:23.5px;top:330px;font-size:7px;color:#e8eef8;">cq05_aa_pfdcp_zdb5</div>
<div style="position:absolute;left:2.3px;top:444px;width:188.5px;height:8px;background:#e8e8e8;border-top:1px solid #ccc"></div>
<div style="position:absolute;left:3px;top:444.5px;width:6px;height:7px;background:#f4f4f4;border:1px solid #bbb"></div>
<svg style="position:absolute;left:0;top:0;overflow:visible" width="1" height="1"><path d="M7.2 446.0L7.2 450.0L4.6 448z" fill="#111"/></svg>
<div style="position:absolute;left:9.5px;top:445px;width:162px;height:6px;background:#e2e2e2;border:1px solid #ccc;border-radius:2px"></div>
<div style="position:absolute;left:174px;top:444.5px;width:7px;height:7px;background:#f4f4f4;border:1px solid #bbb"></div>
<div style="position:absolute;left:182px;top:444.5px;width:7px;height:7px;background:#f4f4f4;border:1px solid #bbb"></div>
<svg style="position:absolute;left:0;top:0;overflow:visible" width="1" height="1"><path d="M178.7 446.0L178.7 450.0L176.1 448z" fill="#111"/></svg>
<svg style="position:absolute;left:0;top:0;overflow:visible" width="1" height="1"><path d="M184.3 446.0L184.3 450.0L186.9 448z" fill="#111"/></svg>
<div style="position:absolute;left:195px;top:44.5px;width:410px;height:409px;background:#333"></div>
<div style="position:absolute;left:200.7px;top:44.5px;width:1.2px;height:409px;background:#8a8a8a"></div>
<div style="position:absolute;left:594.5px;top:444.5px;width:10px;height:8.5px;background:#e6e6e6;border:1px solid #aaa"></div>
<svg style="position:absolute;left:596px;top:445.5px" width="8" height="7"><rect x="1" y="0.8" width="5.5" height="5" fill="none" stroke="#666" stroke-width=".8"/><path d="M2 1.8l3.5 3" stroke="#444" stroke-width=".9"/></svg>
<svg style="position:absolute;left:0;top:0" width="764" height="475" viewBox="0 0 764 475" shape-rendering="crispEdges"><rect x="198" y="104" width="404" height="290" fill="#2330fe" /><rect x="455" y="104" width="146" height="14" fill="#161636" /><rect x="455" y="103.3" width="146" height="1.0" fill="#5a5aa8" /><rect x="600.2" y="103.3" width="1.0" height="14.700000000000003" fill="#5a5aa8" /><rect x="201" y="104.5" width="8" height="2.5" fill="#202050" /><circle cx="220.0" cy="104.8" r="2.9" fill="#2330fe" shape-rendering="auto"/><circle cx="232.3" cy="104.8" r="2.9" fill="#2330fe" shape-rendering="auto"/><circle cx="244.6" cy="104.8" r="2.9" fill="#2330fe" shape-rendering="auto"/><circle cx="256.9" cy="104.8" r="2.9" fill="#2330fe" shape-rendering="auto"/><circle cx="269.2" cy="104.8" r="2.9" fill="#2330fe" shape-rendering="auto"/><circle cx="281.5" cy="104.8" r="2.9" fill="#2330fe" shape-rendering="auto"/><circle cx="293.8" cy="104.8" r="2.9" fill="#2330fe" shape-rendering="auto"/><circle cx="306.1" cy="104.8" r="2.9" fill="#2330fe" shape-rendering="auto"/><circle cx="318.4" cy="104.8" r="2.9" fill="#2330fe" shape-rendering="auto"/><circle cx="330.7" cy="104.8" r="2.9" fill="#2330fe" shape-rendering="auto"/><circle cx="343.0" cy="104.8" r="2.9" fill="#2330fe" shape-rendering="auto"/><circle cx="355.3" cy="104.8" r="2.9" fill="#2330fe" shape-rendering="auto"/><circle cx="367.6" cy="104.8" r="2.9" fill="#2330fe" shape-rendering="auto"/><circle cx="379.9" cy="104.8" r="2.9" fill="#2330fe" shape-rendering="auto"/><circle cx="392.20000000000005" cy="104.8" r="2.9" fill="#2330fe" shape-rendering="auto"/><circle cx="404.5" cy="104.8" r="2.9" fill="#2330fe" shape-rendering="auto"/><circle cx="416.8" cy="104.8" r="2.9" fill="#2330fe" shape-rendering="auto"/><circle cx="429.1" cy="104.8" r="2.9" fill="#2330fe" shape-rendering="auto"/><circle cx="441.4" cy="104.8" r="2.9" fill="#2330fe" shape-rendering="auto"/><circle cx="453.70000000000005" cy="104.8" r="2.9" fill="#2330fe" shape-rendering="auto"/><rect x="214.0" y="103.5" width="3.0" height="1.0" fill="#802050" /><rect x="226.3" y="103.5" width="3.0" height="1.0" fill="#802050" /><rect x="238.6" y="103.5" width="3.0" height="1.0" fill="#802050" /><rect x="250.9" y="103.5" width="3.0" height="1.0" fill="#802050" /><rect x="263.2" y="103.5" width="3.0" height="1.0" fill="#802050" /><rect x="275.5" y="103.5" width="3.0" height="1.0" fill="#802050" /><rect x="287.8" y="103.5" width="3.0" height="1.0" fill="#802050" /><rect x="300.1" y="103.5" width="3.0" height="1.0" fill="#802050" /><rect x="312.4" y="103.5" width="3.0" height="1.0" fill="#802050" /><rect x="324.7" y="103.5" width="3.0" height="1.0" fill="#802050" /><rect x="337.0" y="103.5" width="3.0" height="1.0" fill="#802050" /><rect x="349.3" y="103.5" width="3.0" height="1.0" fill="#802050" /><rect x="361.6" y="103.5" width="3.0" height="1.0" fill="#802050" /><rect x="373.9" y="103.5" width="3.0" height="1.0" fill="#802050" /><rect x="386.20000000000005" y="103.5" width="3.0" height="1.0" fill="#802050" /><rect x="398.5" y="103.5" width="3.0" height="1.0" fill="#802050" /><rect x="410.8" y="103.5" width="3.0" height="1.0" fill="#802050" /><rect x="423.1" y="103.5" width="3.0" height="1.0" fill="#802050" /><rect x="435.4" y="103.5" width="3.0" height="1.0" fill="#802050" /><rect x="447.70000000000005" y="103.5" width="3.0" height="1.0" fill="#802050" /><circle cx="462" cy="118.5" r="2.5" fill="#2330fe"/><circle cx="475" cy="118.5" r="3" fill="#2330fe"/><circle cx="487" cy="118.5" r="2.5" fill="#2330fe"/><circle cx="500" cy="118.5" r="3.5" fill="#2330fe"/><circle cx="512" cy="118.5" r="2.5" fill="#2330fe"/><circle cx="522" cy="118.5" r="3" fill="#2330fe"/><circle cx="540" cy="118.5" r="2" fill="#2330fe"/><circle cx="552" cy="118.5" r="2" fill="#2330fe"/><circle cx="565" cy="118.5" r="2" fill="#2330fe"/><circle cx="580" cy="118.5" r="2" fill="#2330fe"/><circle cx="592" cy="118.5" r="3" fill="#2330fe"/><circle cx="598" cy="118.5" r="2.5" fill="#2330fe"/><rect x="458" y="116.5" width="3" height="1.0" fill="#802050" /><rect x="467" y="116.5" width="3" height="1.0" fill="#802050" /><rect x="476" y="116.5" width="3" height="1.0" fill="#802050" /><rect x="485" y="116.5" width="3" height="1.0" fill="#802050" /><rect x="494" y="116.5" width="3" height="1.0" fill="#802050" /><rect x="503" y="116.5" width="3" height="1.0" fill="#802050" /><rect x="512" y="116.5" width="3" height="1.0" fill="#802050" /><rect x="521" y="116.5" width="3" height="1.0" fill="#802050" /><rect x="530" y="116.5" width="3" height="1.0" fill="#802050" /><rect x="539" y="116.5" width="3" height="1.0" fill="#802050" /><rect x="548" y="116.5" width="3" height="1.0" fill="#802050" /><rect x="557" y="116.5" width="3" height="1.0" fill="#802050" /><rect x="566" y="116.5" width="3" height="1.0" fill="#802050" /><rect x="575" y="116.5" width="3" height="1.0" fill="#802050" /><rect x="584" y="116.5" width="3" height="1.0" fill="#802050" /><rect x="593" y="116.5" width="3" height="1.0" fill="#802050" /><circle cx="203.0" cy="394.5" r="2" fill="#2330fe"/><rect x="206.0" y="393" width="3.0" height="1.1999999999999886" fill="#802050" /><circle cx="213.1" cy="394.5" r="2" fill="#2330fe"/><rect x="216.1" y="393" width="3.0" height="1.1999999999999886" fill="#802050" /><circle cx="223.2" cy="394.5" r="2" fill="#2330fe"/><rect x="226.2" y="393" width="3.0" height="1.1999999999999886" fill="#802050" /><circle cx="233.3" cy="394.5" r="2" fill="#2330fe"/><rect x="236.3" y="393" width="3.0" height="1.1999999999999886" fill="#802050" /><circle cx="243.4" cy="394.5" r="2" fill="#2330fe"/><rect x="246.4" y="393" width="3.0" height="1.1999999999999886" fill="#802050" /><circle cx="253.5" cy="394.5" r="2" fill="#2330fe"/><rect x="256.5" y="393" width="3.0" height="1.1999999999999886" fill="#802050" /><circle cx="263.6" cy="394.5" r="2" fill="#2330fe"/><rect x="266.6" y="393" width="3.0" height="1.1999999999999886" fill="#802050" /><circle cx="273.7" cy="394.5" r="2" fill="#2330fe"/><rect x="276.7" y="393" width="3.0" height="1.1999999999999886" fill="#802050" /><circle cx="283.8" cy="394.5" r="2" fill="#2330fe"/><rect x="286.8" y="393" width="3.0" height="1.1999999999999886" fill="#802050" /><circle cx="293.9" cy="394.5" r="2" fill="#2330fe"/><rect x="296.9" y="393" width="3.0" height="1.1999999999999886" fill="#802050" /><circle cx="304.0" cy="394.5" r="2" fill="#2330fe"/><rect x="307.0" y="393" width="3.0" height="1.1999999999999886" fill="#802050" /><circle cx="314.1" cy="394.5" r="2" fill="#2330fe"/><rect x="317.1" y="393" width="3.0" height="1.1999999999999886" fill="#802050" /><circle cx="324.2" cy="394.5" r="2" fill="#2330fe"/><rect x="327.2" y="393" width="3.0" height="1.1999999999999886" fill="#802050" /><circle cx="334.29999999999995" cy="394.5" r="2" fill="#2330fe"/><rect x="337.29999999999995" y="393" width="3.0" height="1.1999999999999886" fill="#802050" /><circle cx="344.4" cy="394.5" r="2" fill="#2330fe"/><rect x="347.4" y="393" width="3.0" height="1.1999999999999886" fill="#802050" /><circle cx="354.5" cy="394.5" r="2" fill="#2330fe"/><rect x="357.5" y="393" width="3.0" height="1.1999999999999886" fill="#802050" /><circle cx="364.6" cy="394.5" r="2" fill="#2330fe"/><rect x="367.6" y="393" width="3.0" height="1.1999999999999886" fill="#802050" /><circle cx="374.7" cy="394.5" r="2" fill="#2330fe"/><rect x="377.7" y="393" width="3.0" height="1.1999999999999886" fill="#802050" /><circle cx="384.79999999999995" cy="394.5" r="2" fill="#2330fe"/><rect x="387.79999999999995" y="393" width="3.0" height="1.1999999999999886" fill="#802050" /><circle cx="394.9" cy="394.5" r="2" fill="#2330fe"/><rect x="397.9" y="393" width="3.0" height="1.1999999999999886" fill="#802050" /><circle cx="405.0" cy="394.5" r="2" fill="#2330fe"/><rect x="408.0" y="393" width="3.0" height="1.1999999999999886" fill="#802050" /><circle cx="415.1" cy="394.5" r="2" fill="#2330fe"/><rect x="418.1" y="393" width="3.0" height="1.1999999999999886" fill="#802050" /><circle cx="425.2" cy="394.5" r="2" fill="#2330fe"/><rect x="428.2" y="393" width="3.0" height="1.1999999999999886" fill="#802050" /><circle cx="435.29999999999995" cy="394.5" r="2" fill="#2330fe"/><rect x="438.29999999999995" y="393" width="3.0" height="1.1999999999999886" fill="#802050" /><circle cx="445.4" cy="394.5" r="2" fill="#2330fe"/><rect x="448.4" y="393" width="3.0" height="1.1999999999999886" fill="#802050" /><circle cx="455.5" cy="394.5" r="2" fill="#2330fe"/><rect x="458.5" y="393" width="3.0" height="1.1999999999999886" fill="#802050" /><circle cx="465.59999999999997" cy="394.5" r="2" fill="#2330fe"/><rect x="468.59999999999997" y="393" width="3.0" height="1.1999999999999886" fill="#802050" /><circle cx="475.7" cy="394.5" r="2" fill="#2330fe"/><rect x="478.7" y="393" width="3.0" height="1.1999999999999886" fill="#802050" /><circle cx="485.8" cy="394.5" r="2" fill="#2330fe"/><rect x="488.8" y="393" width="3.0" height="1.1999999999999886" fill="#802050" /><circle cx="495.9" cy="394.5" r="2" fill="#2330fe"/><rect x="498.9" y="393" width="3.0" height="1.1999999999999886" fill="#802050" /><circle cx="506.0" cy="394.5" r="2" fill="#2330fe"/><rect x="509.0" y="393" width="3.0" height="1.1999999999999886" fill="#802050" /><circle cx="516.0999999999999" cy="394.5" r="2" fill="#2330fe"/><rect x="519.0999999999999" y="393" width="3.0" height="1.1999999999999886" fill="#802050" /><circle cx="526.2" cy="394.5" r="2" fill="#2330fe"/><rect x="529.2" y="393" width="3.0" height="1.1999999999999886" fill="#802050" /><circle cx="536.3" cy="394.5" r="2" fill="#2330fe"/><rect x="539.3" y="393" width="3.0" height="1.1999999999999886" fill="#802050" /><circle cx="546.4" cy="394.5" r="2" fill="#2330fe"/><rect x="549.4" y="393" width="3.0" height="1.1999999999999886" fill="#802050" /><circle cx="556.5" cy="394.5" r="2" fill="#2330fe"/><rect x="559.5" y="393" width="3.0" height="1.1999999999999886" fill="#802050" /><circle cx="566.5999999999999" cy="394.5" r="2" fill="#2330fe"/><rect x="569.5999999999999" y="393" width="3.0" height="1.1999999999999886" fill="#802050" /><circle cx="576.7" cy="394.5" r="2" fill="#2330fe"/><rect x="579.7" y="393" width="3.0" height="1.1999999999999886" fill="#802050" /><circle cx="586.8" cy="394.5" r="2" fill="#2330fe"/><rect x="589.8" y="393" width="3.0" height="1.1999999999999886" fill="#802050" /><circle cx="596.9" cy="394.5" r="2" fill="#2330fe"/><rect x="599.9" y="393" width="3.0" height="1.1999999999999886" fill="#802050" /><path d="M197.8 108l1 1.5-1 1.5z" fill="#333"/><path d="M197.8 111l1 1.5-1 1.5z" fill="#333"/><path d="M197.8 114l1 1.5-1 1.5z" fill="#333"/><path d="M197.8 117l1 1.5-1 1.5z" fill="#333"/><path d="M197.8 120l1 1.5-1 1.5z" fill="#333"/><path d="M197.8 123l1 1.5-1 1.5z" fill="#333"/><path d="M197.8 126l1 1.5-1 1.5z" fill="#333"/><path d="M197.8 129l1 1.5-1 1.5z" fill="#333"/><path d="M197.8 132l1 1.5-1 1.5z" fill="#333"/><path d="M197.8 135l1 1.5-1 1.5z" fill="#333"/><path d="M197.8 138l1 1.5-1 1.5z" fill="#333"/><path d="M197.8 141l1 1.5-1 1.5z" fill="#333"/><path d="M197.8 144l1 1.5-1 1.5z" fill="#333"/><path d="M197.8 147l1 1.5-1 1.5z" fill="#333"/><path d="M197.8 150l1 1.5-1 1.5z" fill="#333"/><path d="M197.8 153l1 1.5-1 1.5z" fill="#333"/><path d="M197.8 156l1 1.5-1 1.5z" fill="#333"/><path d="M197.8 159l1 1.5-1 1.5z" fill="#333"/><path d="M197.8 162l1 1.5-1 1.5z" fill="#333"/><path d="M197.8 165l1 1.5-1 1.5z" fill="#333"/><path d="M197.8 168l1 1.5-1 1.5z" fill="#333"/><path d="M197.8 171l1 1.5-1 1.5z" fill="#333"/><path d="M197.8 174l1 1.5-1 1.5z" fill="#333"/><path d="M197.8 177l1 1.5-1 1.5z" fill="#333"/><path d="M197.8 180l1 1.5-1 1.5z" fill="#333"/><path d="M197.8 183l1 1.5-1 1.5z" fill="#333"/><path d="M197.8 186l1 1.5-1 1.5z" fill="#333"/><path d="M197.8 189l1 1.5-1 1.5z" fill="#333"/><path d="M197.8 192l1 1.5-1 1.5z" fill="#333"/><path d="M197.8 195l1 1.5-1 1.5z" fill="#333"/><path d="M197.8 198l1 1.5-1 1.5z" fill="#333"/><path d="M197.8 201l1 1.5-1 1.5z" fill="#333"/><path d="M197.8 204l1 1.5-1 1.5z" fill="#333"/><path d="M197.8 207l1 1.5-1 1.5z" fill="#333"/><path d="M197.8 210l1 1.5-1 1.5z" fill="#333"/><path d="M197.8 213l1 1.5-1 1.5z" fill="#333"/><path d="M197.8 216l1 1.5-1 1.5z" fill="#333"/><path d="M197.8 219l1 1.5-1 1.5z" fill="#333"/><path d="M197.8 222l1 1.5-1 1.5z" fill="#333"/><path d="M197.8 225l1 1.5-1 1.5z" fill="#333"/><path d="M197.8 228l1 1.5-1 1.5z" fill="#333"/><path d="M197.8 231l1 1.5-1 1.5z" fill="#333"/><path d="M197.8 234l1 1.5-1 1.5z" fill="#333"/><path d="M197.8 237l1 1.5-1 1.5z" fill="#333"/><path d="M197.8 240l1 1.5-1 1.5z" fill="#333"/><path d="M197.8 243l1 1.5-1 1.5z" fill="#333"/><path d="M197.8 246l1 1.5-1 1.5z" fill="#333"/><path d="M197.8 249l1 1.5-1 1.5z" fill="#333"/><path d="M197.8 252l1 1.5-1 1.5z" fill="#333"/><path d="M197.8 255l1 1.5-1 1.5z" fill="#333"/><path d="M197.8 258l1 1.5-1 1.5z" fill="#333"/><path d="M197.8 261l1 1.5-1 1.5z" fill="#333"/><path d="M197.8 264l1 1.5-1 1.5z" fill="#333"/><path d="M197.8 267l1 1.5-1 1.5z" fill="#333"/><path d="M197.8 270l1 1.5-1 1.5z" fill="#333"/><path d="M197.8 273l1 1.5-1 1.5z" fill="#333"/><path d="M197.8 276l1 1.5-1 1.5z" fill="#333"/><path d="M197.8 279l1 1.5-1 1.5z" fill="#333"/><path d="M197.8 282l1 1.5-1 1.5z" fill="#333"/><path d="M197.8 285l1 1.5-1 1.5z" fill="#333"/><path d="M197.8 288l1 1.5-1 1.5z" fill="#333"/><path d="M197.8 291l1 1.5-1 1.5z" fill="#333"/><path d="M197.8 294l1 1.5-1 1.5z" fill="#333"/><path d="M197.8 297l1 1.5-1 1.5z" fill="#333"/><path d="M197.8 300l1 1.5-1 1.5z" fill="#333"/><path d="M197.8 303l1 1.5-1 1.5z" fill="#333"/><path d="M197.8 306l1 1.5-1 1.5z" fill="#333"/><path d="M197.8 309l1 1.5-1 1.5z" fill="#333"/><path d="M197.8 312l1 1.5-1 1.5z" fill="#333"/><path d="M197.8 315l1 1.5-1 1.5z" fill="#333"/><path d="M197.8 318l1 1.5-1 1.5z" fill="#333"/><path d="M197.8 321l1 1.5-1 1.5z" fill="#333"/><path d="M197.8 324l1 1.5-1 1.5z" fill="#333"/><path d="M197.8 327l1 1.5-1 1.5z" fill="#333"/><path d="M197.8 330l1 1.5-1 1.5z" fill="#333"/><path d="M197.8 333l1 1.5-1 1.5z" fill="#333"/><path d="M197.8 336l1 1.5-1 1.5z" fill="#333"/><path d="M197.8 339l1 1.5-1 1.5z" fill="#333"/><path d="M197.8 342l1 1.5-1 1.5z" fill="#333"/><path d="M197.8 345l1 1.5-1 1.5z" fill="#333"/><path d="M197.8 348l1 1.5-1 1.5z" fill="#333"/><path d="M197.8 351l1 1.5-1 1.5z" fill="#333"/><path d="M197.8 354l1 1.5-1 1.5z" fill="#333"/><path d="M197.8 357l1 1.5-1 1.5z" fill="#333"/><path d="M197.8 360l1 1.5-1 1.5z" fill="#333"/><path d="M197.8 363l1 1.5-1 1.5z" fill="#333"/><path d="M197.8 366l1 1.5-1 1.5z" fill="#333"/><path d="M197.8 369l1 1.5-1 1.5z" fill="#333"/><path d="M197.8 372l1 1.5-1 1.5z" fill="#333"/><path d="M197.8 375l1 1.5-1 1.5z" fill="#333"/><path d="M197.8 378l1 1.5-1 1.5z" fill="#333"/><path d="M197.8 381l1 1.5-1 1.5z" fill="#333"/><path d="M197.8 384l1 1.5-1 1.5z" fill="#333"/><path d="M197.8 387l1 1.5-1 1.5z" fill="#333"/><path d="M197.8 390l1 1.5-1 1.5z" fill="#333"/><rect x="197.8" y="104" width="2.1999999999999886" height="7" fill="#333" /><rect x="209" y="214" width="7" height="9" fill="#2a78f2" /><rect x="201" y="222.5" width="15" height="22.5" fill="#2a78f2" /><rect x="216" y="221" width="5" height="4" fill="#2a78f2" /><rect x="206" y="237.5" width="124" height="7.5" fill="#2a78f2" /><rect x="214" y="244" width="48" height="7" fill="#2a78f2" /><rect x="258" y="245" width="7.5" height="60" fill="#2a78f2" /><rect x="279" y="229" width="21" height="4.5" fill="#12122e" /><rect x="283" y="227.5" width="9" height="1.5" fill="#12122e" /><rect x="302" y="230" width="10" height="2" fill="#404080" /><rect x="324" y="229.5" width="11" height="4.5" fill="#12122e" /><rect x="318" y="231.5" width="5" height="2.5" fill="#ff5060" /><rect x="370" y="163.7" width="113.89999999999998" height="2.9000000000000057" fill="#ee2200" /><rect x="370" y="163.5" width="6" height="4.5" fill="#ffff80" /><rect x="375" y="163.7" width="13" height="2.9000000000000057" fill="#22dd00" /><rect x="388" y="163.7" width="9" height="2.9000000000000057" fill="#aaee00" /><rect x="397" y="163.7" width="4" height="2.9000000000000057" fill="#ff6600" /><rect x="480" y="164" width="3.5" height="16" fill="#ee2200" /><rect x="477.5" y="178" width="3.5" height="38.5" fill="#ee2200" /><rect x="376" y="213.5" width="105" height="3.0999999999999943" fill="#ee2200" /><rect x="376" y="213.5" width="5" height="3.0999999999999943" fill="#ffff80" /><rect x="381" y="213.5" width="9" height="3.0999999999999943" fill="#22dd00" /><rect x="390" y="213.5" width="6" height="3.0999999999999943" fill="#aaee00" /><rect x="484" y="165" width="4" height="3" fill="#ffee00" /><text x="353.5" y="175.5" font-family="Liberation Sans" font-size="6.8" font-weight="bold" fill="#f4f8ff" letter-spacing="2.1" shape-rendering="auto">lmuMnnnn</text><text x="453" y="175.5" font-family="Liberation Sans" font-size="6.6" font-weight="bold" fill="#f4f8ff" letter-spacing="0.9" shape-rendering="auto">nnnnnDum</text><text x="409" y="189.5" font-family="Liberation Sans" font-size="6.4" font-weight="bold" fill="#f4f8ff" letter-spacing="0.8" shape-rendering="auto">"NW</text><text x="434" y="189.5" font-family="Liberation Sans" font-size="6.4" font-weight="bold" fill="#f4f8ff" letter-spacing="0.8" shape-rendering="auto">WN"</text><text x="369" y="208.5" font-family="Liberation Sans" font-size="6.8" font-weight="bold" fill="#f0f070" letter-spacing="1.2" shape-rendering="auto">ooo</text><rect x="355" y="177.4" width="12" height="5.299999999999983" fill="#2a78f2" /><rect x="388" y="177.4" width="11" height="5.299999999999983" fill="#2a78f2" /><rect x="399" y="177.4" width="14" height="5.299999999999983" fill="#11ddff" /><rect x="419" y="177.4" width="15" height="5.299999999999983" fill="#2a78f2" /><rect x="434" y="177.4" width="13" height="5.299999999999983" fill="#11ddff" /><rect x="447" y="177.4" width="15" height="5.299999999999983" fill="#aaffff" /><rect x="462" y="177.4" width="8" height="5.299999999999983" fill="#55aa80" /><rect x="470" y="177.4" width="8" height="5.299999999999983" fill="#22dd00" /><rect x="483" y="177.4" width="7" height="5.299999999999983" fill="#aaee00" /><rect x="490" y="176.5" width="15" height="6.0" fill="#11ddff" /><rect x="505" y="176.5" width="15" height="6.0" fill="#aaee00" /><rect x="520" y="176.5" width="12" height="6.0" fill="#aaffff" /><rect x="541" y="174.5" width="27" height="3.5" fill="#11ddff" /><rect x="354" y="191" width="18" height="6" fill="#2a78f2" /><rect x="386" y="191" width="8" height="6" fill="#2a78f2" /><rect x="394" y="191" width="14" height="6" fill="#11ddff" /><rect x="427" y="192" width="6" height="5" fill="#2a78f2" /><rect x="469" y="192" width="9" height="5" fill="#2a78f2" /><rect x="476" y="192" width="10" height="5" fill="#11ddff" /><rect x="505" y="192" width="15" height="5" fill="#2a78f2" /><rect x="406" y="150" width="3" height="65" fill="#2a78f2" /><rect x="413" y="170" width="3" height="45" fill="#2a78f2" /><rect x="410" y="208" width="18" height="2" fill="#aaffff" /><rect x="425" y="205" width="3" height="8" fill="#11ddff" /><rect x="446" y="199" width="2" height="7" fill="#11ddff" /><rect x="412" y="171" width="2" height="9" fill="#55aa80" /><rect x="412" y="170" width="27" height="2" fill="#2a78f2" /><rect x="398" y="188" width="12" height="1" fill="#2a78f2" /><rect x="440" y="188" width="50" height="1.5" fill="#2a78f2" /><rect x="453" y="148" width="6" height="4" fill="#2a78f2" /><rect x="470" y="148" width="30" height="4" fill="#2a78f2" /><rect x="497" y="149" width="5" height="28" fill="#2a78f2" /><rect x="481" y="187.3" width="49" height="2.3999999999999773" fill="#11ddff" /><rect x="420" y="197" width="4" height="8" fill="#2a78f2" /><rect x="430" y="200" width="3" height="12" fill="#2a78f2" /><rect x="533" y="158" width="57" height="8" fill="#aaee00" /><rect x="537" y="161.5" width="53" height="3.5" fill="#ffff80" /><rect x="533" y="158" width="8" height="110" fill="#aaee00" /><rect x="537" y="161.5" width="4" height="38.5" fill="#ffff80" /><rect x="550" y="154.5" width="20" height="3.5" fill="#ffff80" /><rect x="541" y="187" width="3" height="45" fill="#11ddff" /><rect x="527" y="188" width="4" height="12" fill="#aaffff" /><rect x="357" y="239.5" width="174" height="5.0" fill="#10102a" /><rect x="488" y="182" width="11" height="59" fill="#aaee00" /><rect x="499" y="192" width="5" height="40" fill="#ffc000" /><rect x="499" y="232" width="14" height="6" fill="#ffc000" /><rect x="507" y="238" width="6" height="20" fill="#ffc000" /><rect x="499" y="238" width="8" height="29" fill="#aaee00" /><rect x="440" y="252.3" width="73" height="5.699999999999989" fill="#ffc000" /><rect x="499" y="238" width="8" height="29" fill="#aaee00" /><rect x="546" y="233" width="6" height="2.5" fill="#151540" /><rect x="554" y="233" width="4" height="2.5" fill="#151540" /><rect x="544" y="238.5" width="16" height="2.5" fill="#151540" /><rect x="562" y="231" width="3" height="12" fill="#151540" /><rect x="440" y="258" width="22" height="18" fill="#aaffff" /><rect x="462" y="258" width="22" height="18" fill="#11ddff" /><rect x="484" y="258" width="16" height="18" fill="#55aa80" /><rect x="500" y="258" width="4" height="18" fill="#aaffff" /><rect x="504" y="258" width="30" height="18" fill="#2a78f2" /><rect x="440" y="276" width="6" height="19" fill="#2a78f2" /><rect x="531" y="200" width="7" height="67" fill="#aaee00" /><rect x="563" y="140" width="7" height="7" fill="#11ddff" /><rect x="566" y="145" width="5" height="27" fill="#aaffff" /><rect x="571" y="167" width="3" height="13" fill="#aaffff" /><rect x="574" y="178" width="10" height="2" fill="#aaffff" /><rect x="566" y="185" width="5" height="16" fill="#2a78f2" /><rect x="574" y="195" width="16" height="2" fill="#aaffff" /><rect x="581" y="145" width="2" height="25" fill="#aaffff" /><rect x="585" y="145" width="2" height="10" fill="#aaffff" /><rect x="584" y="152" width="6" height="4" fill="#ffc000" /><rect x="582.5" y="150" width="5.0" height="10" fill="#aaffff" /><rect x="582.5" y="160" width="5.0" height="45" fill="#aaee00" /><rect x="582.5" y="205" width="5.0" height="9" fill="#ffff80" /><rect x="582.5" y="214" width="5.0" height="5" fill="#ffc000" /><rect x="582.5" y="219" width="5.0" height="6" fill="#ee2200" /><rect x="589" y="150" width="5" height="15" fill="#99ddaa" /><rect x="589" y="165" width="5" height="30" fill="#aaee00" /><rect x="589" y="195" width="5" height="8" fill="#ffff80" /><rect x="589" y="203" width="5" height="22" fill="#ffc000" /><rect x="577" y="224" width="17" height="2" fill="#ffee00" /><rect x="582.5" y="226" width="5.0" height="11" fill="#11ddff" /><rect x="589" y="226" width="5" height="11" fill="#11ddff" /><rect x="582.5" y="237" width="5.0" height="11" fill="#2a78f2" /><rect x="589" y="237" width="5" height="11" fill="#2a78f2" /><rect x="550" y="174" width="18" height="4" fill="#11ddff" /><rect x="540" y="190" width="3" height="42" fill="#11ddff" /><rect x="360" y="258" width="36" height="17" fill="#2a78f2" /><rect x="396" y="258" width="34" height="35" fill="#11ddff" /><rect x="430" y="258" width="20" height="18" fill="#aaffff" /><rect x="355" y="275" width="15" height="29" fill="#2a78f2" /><rect x="369" y="275" width="7" height="11" fill="#2a78f2" /><rect x="369" y="285" width="12" height="20" fill="#aaffff" /><rect x="375" y="276" width="11" height="9" fill="#aaffff" /><rect x="381" y="285" width="5" height="11" fill="#aaffff" /><rect x="386" y="276" width="4" height="17" fill="#55aa80" /><rect x="390" y="276" width="20" height="19" fill="#11ddff" /><rect x="410" y="276" width="22" height="19" fill="#2a78f2" /><rect x="430" y="254" width="8" height="59" fill="#22dd00" /><rect x="430" y="297" width="8" height="2" fill="#55aa80" /><rect x="366" y="316" width="2" height="24" fill="#2a78f2" /><rect x="461" y="300" width="1" height="25" fill="#2a78f2" /><rect x="467" y="300" width="1" height="25" fill="#2a78f2" /><rect x="432" y="252" width="18" height="5" fill="#ffc000" /><rect x="300" y="240" width="30" height="4" fill="#2a78f2" /><rect x="316.9" y="305.7" width="76.80000000000001" height="10.600000000000023" fill="#ee2200" /><rect x="320" y="305.7" width="2" height="10.600000000000023" fill="#ffee60" /><rect x="385.5" y="305.7" width="2.0" height="10.600000000000023" fill="#ffee60" /><rect x="310" y="305.7" width="7" height="10.600000000000023" fill="#aaee00" /><rect x="306" y="305.7" width="4" height="10.600000000000023" fill="#55aa80" /><rect x="298" y="305.7" width="8" height="10.600000000000023" fill="#11ddff" /><rect x="281" y="305" width="16" height="11.5" fill="#2a78f2" /><rect x="233" y="305" width="29" height="11" fill="#2a78f2" /><rect x="240" y="298" width="9" height="7" fill="#2a78f2" /><rect x="216" y="305" width="4" height="11" fill="#aaffff" /><rect x="220" y="305" width="7" height="11" fill="#aaee00" /><rect x="227" y="305" width="6" height="11" fill="#55aa80" /><rect x="233" y="305" width="12" height="11" fill="#11ddff" /><rect x="210" y="305" width="6" height="11" fill="#2a78f2" /><rect x="399" y="312" width="12" height="20" fill="#55aa80" /><rect x="396" y="332" width="6" height="16" fill="#55aa80" /><rect x="361" y="328" width="6" height="22" fill="#ffff80" /><rect x="361" y="346" width="43" height="6" fill="#ffff80" /><rect x="404" y="347" width="6" height="15" fill="#55aa80" /><rect x="379" y="344" width="23" height="3" fill="#55aa80" /><rect x="403" y="358" width="8" height="5" fill="#aaffff" /><rect x="387" y="357" width="16" height="11" fill="#11ddff" /><rect x="378" y="354" width="5" height="6" fill="#22dd00" /><rect x="383" y="360" width="7" height="8" fill="#2a78f2" /><rect x="417" y="303" width="4" height="19" fill="#aaffff" /><rect x="417" y="322" width="3" height="18" fill="#2a78f2" /><rect x="426" y="312" width="12" height="23" fill="#2a78f2" /><rect x="444" y="306" width="6" height="10" fill="#55aa80" /><rect x="437" y="367" width="4" height="18" fill="#aaffff" /><rect x="360" y="322" width="8" height="6" fill="#11ddff" /><rect x="401" y="373" width="18" height="3" fill="#10102a" /><rect x="404" y="376" width="13" height="4" fill="#10102a" /><rect x="407" y="380" width="7" height="2" fill="#10102a" /><rect x="396" y="371" width="8" height="3" fill="#10102a" /><rect x="408" y="389" width="10" height="5" fill="#10102a" /><rect x="410" y="386" width="6" height="3" fill="#10102a" /><rect x="450" y="305.3" width="3" height="11.300000000000011" fill="#aaffff" /><rect x="453" y="305.3" width="8" height="11.300000000000011" fill="#55aa80" /><rect x="461" y="305.3" width="8" height="11.300000000000011" fill="#11ddff" /><rect x="469" y="305.3" width="16" height="11.300000000000011" fill="#2a78f2" /><rect x="450" y="367" width="4" height="18" fill="#11ddff" /><rect x="463" y="367" width="4" height="18" fill="#11ddff" /><rect x="476" y="367" width="4" height="18" fill="#11ddff" /><rect x="489" y="367" width="4" height="18" fill="#11ddff" /><rect x="502" y="367" width="4" height="18" fill="#11ddff" /><rect x="515" y="367" width="4" height="18" fill="#11ddff" /><rect x="528" y="367" width="4" height="18" fill="#11ddff" /><rect x="530" y="382" width="11" height="4" fill="#11ddff" /><rect x="225" y="126" width="5" height="1.5999999999999943" fill="#6a2a90" /><rect x="237" y="126" width="5" height="1.5999999999999943" fill="#6a2a90" /><rect x="250" y="124.5" width="4" height="1.5999999999999943" fill="#6a2a90" /><rect x="223" y="145" width="4" height="1.5999999999999943" fill="#502a90" /><rect x="232" y="145.5" width="5" height="1.5999999999999943" fill="#502a90" /><rect x="265" y="145" width="5" height="1.5999999999999943" fill="#d040a0" /><rect x="274" y="139.5" width="6" height="1.5999999999999943" fill="#6a3090" /><rect x="282" y="157" width="8" height="1.5999999999999943" fill="#6a2a90" /><rect x="285" y="161.5" width="3" height="1.5999999999999943" fill="#8a40c0" /><rect x="324" y="157" width="6" height="1.5999999999999943" fill="#d040a0" /><rect x="337" y="160.5" width="2" height="1.5999999999999943" fill="#20e0ff" /><rect x="330" y="170" width="8" height="1.5999999999999943" fill="#6a2a90" /><rect x="285" y="168.5" width="8" height="1.5999999999999943" fill="#502a90" /><rect x="294" y="180.5" width="6" height="1.5999999999999943" fill="#6a2a90" /><rect x="318" y="193.5" width="10" height="1.5999999999999943" fill="#502a90" /><rect x="285" y="204" width="8" height="1.5999999999999943" fill="#6a2a90" /><rect x="327" y="205.5" width="10" height="1.5999999999999943" fill="#8a2a90" /><rect x="285" y="217.5" width="3" height="1.5999999999999943" fill="#8a2a90" /><rect x="330" y="220.5" width="3" height="1.5999999999999943" fill="#8a2a90" /><rect x="218" y="167.5" width="3" height="1.5999999999999943" fill="#502a90" /><rect x="218" y="208.5" width="3" height="1.5999999999999943" fill="#502a90" /><rect x="226" y="155.5" width="3" height="1.5999999999999943" fill="#502a90" /><rect x="347" y="150" width="3" height="1.5999999999999943" fill="#10102a" /><rect x="465" y="149" width="4" height="1.5999999999999943" fill="#e04080" /><rect x="480" y="141" width="3" height="1.5999999999999943" fill="#8a2a90" /><rect x="520" y="138" width="5" height="1.5999999999999943" fill="#6a2a90" /><rect x="540" y="132" width="5" height="1.5999999999999943" fill="#6a2a90" /><rect x="590" y="137" width="5" height="1.5999999999999943" fill="#6a2a90" /><rect x="431" y="195" width="3" height="1.5999999999999943" fill="#6a2a90" /><rect x="452" y="218" width="3" height="1.5999999999999943" fill="#6a2a90" /><rect x="425" y="350" width="8" height="1.6000000000000227" fill="#6a2a90" /><rect x="345" y="339" width="4" height="1.6000000000000227" fill="#6a2a90" /><rect x="330" y="343" width="4" height="1.6000000000000227" fill="#6a2a90" /><rect x="260" y="343" width="4" height="1.6000000000000227" fill="#6a2a90" /><rect x="290" y="350" width="6" height="1.6000000000000227" fill="#6a2a90" /><rect x="333" y="371" width="6" height="1.6000000000000227" fill="#7a2a70" /><rect x="355" y="371" width="6" height="1.6000000000000227" fill="#7a2a70" /><rect x="366" y="370" width="6" height="1.6000000000000227" fill="#7a2a70" /><rect x="378" y="372" width="6" height="1.6000000000000227" fill="#7a2a70" /><rect x="535" y="370" width="5" height="1.6000000000000227" fill="#7a2a70" /><rect x="545" y="372" width="5" height="1.6000000000000227" fill="#7a2a70" /><rect x="560" y="193" width="3" height="1.5999999999999943" fill="#6a2a90" /><rect x="555" y="260" width="3" height="1.6000000000000227" fill="#6a2a90" /><rect x="470" y="290" width="3" height="1.6000000000000227" fill="#6a2a90" /><rect x="390" y="157" width="8" height="1.5999999999999943" fill="#6a2a90" /><rect x="410" y="152" width="10" height="1.5999999999999943" fill="#502a90" /><rect x="440" y="158" width="8" height="1.5999999999999943" fill="#6a2a90" /><rect x="500" y="138" width="8" height="1.5999999999999943" fill="#6a2a90" /><rect x="380" y="140" width="6" height="1.5999999999999943" fill="#6a2a90" /><rect x="360" y="133" width="5" height="1.5999999999999943" fill="#6a2a90" /><rect x="257" y="370" width="4" height="1.6000000000000227" fill="#7a2a70" /><rect x="287" y="360" width="5" height="1.6000000000000227" fill="#7a2a70" /><rect x="300" y="364" width="5" height="1.6000000000000227" fill="#7a2a70" /><rect x="315" y="367" width="5" height="1.6000000000000227" fill="#7a2a70" /><rect x="340" y="366" width="5" height="1.6000000000000227" fill="#7a2a70" /><rect x="445" y="367" width="5" height="1.6000000000000227" fill="#7a2a70" /><rect x="303.5" y="291" width="2.0" height="43" fill="#2a78f2" /><rect x="303.5" y="303.5" width="2.0" height="2.5" fill="#aaffff" /><rect x="303.5" y="315" width="2.0" height="2.5" fill="#aaffff" /><rect x="309.5" y="291" width="2.0" height="43" fill="#2a78f2" /><rect x="309.5" y="303.5" width="2.0" height="2.5" fill="#aaffff" /><rect x="309.5" y="315" width="2.0" height="2.5" fill="#aaffff" /><rect x="315.5" y="291" width="2.0" height="43" fill="#2a78f2" /><rect x="315.5" y="303.5" width="2.0" height="2.5" fill="#aaffff" /><rect x="315.5" y="315" width="2.0" height="2.5" fill="#aaffff" /><rect x="208.5" y="291" width="2.0" height="43" fill="#2a78f2" /><rect x="208.5" y="303.5" width="2.0" height="2.5" fill="#aaffff" /><rect x="208.5" y="315" width="2.0" height="2.5" fill="#aaffff" /><rect x="214.5" y="291" width="2.0" height="43" fill="#2a78f2" /><rect x="214.5" y="303.5" width="2.0" height="2.5" fill="#aaffff" /><rect x="214.5" y="315" width="2.0" height="2.5" fill="#aaffff" /><rect x="220" y="291" width="2" height="43" fill="#2a78f2" /><rect x="220" y="303.5" width="2" height="2.5" fill="#aaffff" /><rect x="220" y="315" width="2" height="2.5" fill="#aaffff" /><rect x="225.5" y="291" width="2.0" height="43" fill="#2a78f2" /><rect x="225.5" y="303.5" width="2.0" height="2.5" fill="#aaffff" /><rect x="225.5" y="315" width="2.0" height="2.5" fill="#aaffff" /><rect x="231.5" y="299" width="2.0" height="26" fill="#2a78f2" /><rect x="214" y="305" width="6" height="11" fill="#aaffff" /><rect x="220" y="305" width="7" height="11" fill="#aaee00" /><rect x="227" y="305" width="5.5" height="11" fill="#55aa80" /><rect x="232.5" y="305" width="12.5" height="11" fill="#11ddff" /><rect x="298" y="305.7" width="8" height="10.600000000000023" fill="#11ddff" /><rect x="306" y="305.7" width="4" height="10.600000000000023" fill="#55aa80" /><rect x="310" y="305.7" width="7" height="10.600000000000023" fill="#aaee00" /><rect x="357" y="154.5" width="2.5" height="2.0" fill="#3a2a8a" /><rect x="361" y="154.5" width="2.5" height="2.0" fill="#3a2a8a" /><rect x="365" y="154.5" width="2.5" height="2.0" fill="#3a2a8a" /><rect x="369" y="154.5" width="2.5" height="2.0" fill="#3a2a8a" /><rect x="373" y="154.5" width="2.5" height="2.0" fill="#3a2a8a" /><rect x="377" y="154.5" width="2.5" height="2.0" fill="#3a2a8a" /><rect x="381" y="154.5" width="2.5" height="2.0" fill="#3a2a8a" /><rect x="385" y="154.5" width="2.5" height="2.0" fill="#3a2a8a" /><rect x="389" y="154.5" width="2.5" height="2.0" fill="#3a2a8a" /><rect x="393" y="154.5" width="2.5" height="2.0" fill="#3a2a8a" /><rect x="397" y="154.5" width="2.5" height="2.0" fill="#3a2a8a" /><rect x="401" y="154.5" width="2.5" height="2.0" fill="#3a2a8a" /><rect x="405" y="154.5" width="2.5" height="2.0" fill="#3a2a8a" /><rect x="409" y="154.5" width="2.5" height="2.0" fill="#3a2a8a" /><rect x="413" y="154.5" width="2.5" height="2.0" fill="#3a2a8a" /><rect x="442" y="154.5" width="2.5" height="2.0" fill="#3a2a8a" /><rect x="446" y="154.5" width="2.5" height="2.0" fill="#3a2a8a" /><rect x="450" y="154.5" width="2.5" height="2.0" fill="#3a2a8a" /><rect x="454" y="154.5" width="2.5" height="2.0" fill="#3a2a8a" /><rect x="458" y="154.5" width="2.5" height="2.0" fill="#3a2a8a" /><rect x="462" y="154.5" width="2.5" height="2.0" fill="#3a2a8a" /><rect x="466" y="154.5" width="2.5" height="2.0" fill="#3a2a8a" /><rect x="470" y="154.5" width="2.5" height="2.0" fill="#3a2a8a" /><rect x="474" y="154.5" width="2.5" height="2.0" fill="#3a2a8a" /><rect x="478" y="154.5" width="2.5" height="2.0" fill="#3a2a8a" /><rect x="358" y="157.5" width="2" height="1.5" fill="#3a2a9a" /><rect x="363" y="157.5" width="2" height="1.5" fill="#3a2a9a" /><rect x="368" y="157.5" width="2" height="1.5" fill="#3a2a9a" /><rect x="373" y="157.5" width="2" height="1.5" fill="#3a2a9a" /><rect x="378" y="157.5" width="2" height="1.5" fill="#3a2a9a" /><rect x="383" y="157.5" width="2" height="1.5" fill="#3a2a9a" /><rect x="388" y="157.5" width="2" height="1.5" fill="#3a2a9a" /><rect x="393" y="157.5" width="2" height="1.5" fill="#3a2a9a" /><rect x="398" y="157.5" width="2" height="1.5" fill="#3a2a9a" /><rect x="403" y="157.5" width="2" height="1.5" fill="#3a2a9a" /><rect x="408" y="157.5" width="2" height="1.5" fill="#3a2a9a" /><rect x="372" y="131" width="3" height="2" fill="#6a2a90" /><rect x="393" y="131" width="3" height="2" fill="#6a2a90" /><rect x="420" y="131" width="3" height="2" fill="#6a2a90" /><rect x="448" y="131" width="3" height="2" fill="#6a2a90" /><rect x="460" y="131" width="3" height="2" fill="#6a2a90" /><rect x="470" y="131" width="3" height="2" fill="#6a2a90" /><rect x="488" y="131" width="3" height="2" fill="#6a2a90" /><rect x="500" y="131" width="3" height="2" fill="#6a2a90" /><rect x="346" y="149" width="3" height="6" fill="#10102a" /><rect x="455" y="148" width="5" height="2" fill="#2a78f2" /><rect x="200.7" y="104" width="1.2" height="291" fill="#9a9aff" opacity=".12"/></svg>
<div style="position:absolute;left:609px;top:47.5px;width:64px;height:4px;background-image:radial-gradient(circle at 1px 1px,#cecece 0.7px,transparent 1px),radial-gradient(circle at 2.5px 2.8px,#cecece 0.7px,transparent 1px);background-size:3px 4px"></div>
<div class="t" style="left:676px;top:46.8px;font-size:6.4px;color:#333;">EM</div>
<div style="position:absolute;left:685.6px;top:47.5px;width:60.39999999999998px;height:4px;background-image:radial-gradient(circle at 1px 1px,#cecece 0.7px,transparent 1px),radial-gradient(circle at 2.5px 2.8px,#cecece 0.7px,transparent 1px);background-size:3px 4px"></div>
<svg style="position:absolute;left:752.5px;top:45.5px" width="16" height="8"><rect x="0.5" y="0.5" width="6.5" height="6.5" rx="1.2" fill="#d8d8d8" stroke="#c0c0c0" stroke-width=".6"/><rect x="8.5" y="0.5" width="6.5" height="6.5" rx="1.2" fill="#d8d8d8" stroke="#c0c0c0" stroke-width=".6"/><rect x="2.5" y="2.8" width="3" height="3" fill="none" stroke="#333" stroke-width=".9"/><path d="M3.5 2.2v-.6h3v3h-.6" fill="none" stroke="#333" stroke-width=".9"/><path d="M10 2l3.5 3.5M13.5 2l-3.5 3.5" stroke="#222" stroke-width="1.1"/></svg>
<div style="position:absolute;left:605px;top:44px;width:159px;height:1px;background:#dcdcdc"></div>
<div style="position:absolute;left:609px;top:56px;width:37px;height:10.5px;background:linear-gradient(#e4e4e4,#d6d6d6);border-radius:1px"></div>
<div class="t" style="left:619.5px;top:58.3px;font-size:7.2px;color:#333;">Load</div>
<div style="position:absolute;left:609px;top:71.3px;width:155px;height:1px;background:#a8a8a8"></div>
<div class="t" style="left:609px;top:79.8px;font-size:7.2px;color:#333;">Color Map</div>
<div style="position:absolute;left:644px;top:78.6px;width:57px;height:9.6px;background:linear-gradient(#e6e6e6,#dadada);border-radius:1px"></div>
<div class="t" style="left:646px;top:80px;font-size:7.2px;color:#333;">EM_AVG</div>
<div style="position:absolute;left:693px;top:80px;width:1px;height:8px;background:#777"></div>
<div style="position:absolute;left:695.5px;top:83px;width:0;height:0;border-left:2.5px solid transparent;border-right:2.5px solid transparent;border-top:3px solid #222"></div>
<div style="position:absolute;left:729px;top:78.6px;width:40px;height:9.6px;background:linear-gradient(#e6e6e6,#dadada);border-radius:1px"></div>
<div class="t" style="left:737px;top:80px;font-size:7.2px;color:#333;">Report</div>
<div style="position:absolute;left:609px;top:93px;width:155px;height:1px;background:#a8a8a8"></div>
<div style="position:absolute;left:609px;top:108px;width:155px;height:1.3px;background:#333"></div>
<div style="position:absolute;left:609px;top:99.5px;width:33px;height:9px;background:#e0e0e0;border:1px solid #555;border-bottom:none;border-radius:2px 2px 0 0"></div>
<div class="t" style="left:613px;top:100.3px;font-size:7.2px;color:#333;">Layers</div>
<div style="position:absolute;left:642px;top:99.5px;width:27px;height:9px;background:#e0e0e0;border:1px solid #555;border-bottom:none;border-radius:2px 2px 0 0"></div>
<div class="t" style="left:647.5px;top:100.3px;font-size:7.2px;color:#333;">Nets</div>
<div style="position:absolute;left:669px;top:97.5px;width:43px;height:11.5px;background:#efefef;border:1.3px solid #333;border-bottom:none;border-radius:2px 2px 0 0"></div>
<div class="t" style="left:674.5px;top:100px;font-size:7.2px;color:#222;">ColorMap</div>
<div style="position:absolute;left:609px;top:108px;width:1.3px;height:212px;background:#333"></div>
<div style="position:absolute;left:611px;top:111.5px;width:58px;height:9.5px;background:#e2e2e2;border-radius:1px"></div>
<div class="t" style="left:612.5px;top:112.8px;font-size:7.1px;color:#333;">Create ColorMap</div>
<div class="t" style="left:610.5px;top:128px;font-size:6.95px;color:#333;">Minimal: 0%  Maximal: 216.316%</div>
<div style="position:absolute;left:610.3px;top:147.8px;width:154px;height:172.3px;background:#fff;border:1.3px solid #333;border-right:none"></div>
<div style="position:absolute;left:611.6px;top:149px;width:152.4px;height:10.5px;background:linear-gradient(#f0f0f0,#dcdcdc)"></div>
<div style="position:absolute;left:620.5px;top:149px;width:1px;height:10.5px;background:#b8b8b8"></div>
<div style="position:absolute;left:631.5px;top:149px;width:1px;height:10.5px;background:#b8b8b8"></div>
<svg style="position:absolute;left:611.5px;top:150px" width="9" height="8"><path d="M1 4c2-3 5-3 7 0c-2 3-5 3-7 0z" fill="none" stroke="#444" stroke-width=".8"/><circle cx="4.5" cy="4" r="1.3" fill="#444"/></svg>
<div style="position:absolute;left:623px;top:150.5px;width:7px;height:7.5px;background:linear-gradient(135deg,#f0c040,#e040e0,#40c0f0);opacity:.6;border:1px solid #999"></div>
<div class="t" style="left:690px;top:151.3px;font-size:7.2px;color:#222;">Value</div>
<div style="position:absolute;left:611.6px;top:172.25px;width:152.4px;height:1px;background:#ececec"></div>
<div style="position:absolute;left:620.5px;top:159.1px;width:1px;height:14.15px;background:#ececec"></div>
<div style="position:absolute;left:631.5px;top:159.1px;width:1px;height:14.15px;background:#ececec"></div>
<svg style="position:absolute;left:612.7px;top:163.6px" width="5.6" height="5.6"><path d="M1 1L4.6 4.6M4.6 1L1 4.6" stroke="#111" stroke-width="1.8"/></svg>
<div style="position:absolute;left:622px;top:162.4px;width:9px;height:7.5px;background:#ee2200;border:1px solid #666"></div>
<div class="t" style="left:633.5px;top:163.4px;font-size:7.3px;color:#333;">EM &gt;= 100%</div>
<div style="position:absolute;left:611.6px;top:186.4px;width:152.4px;height:1px;background:#ececec"></div>
<div style="position:absolute;left:620.5px;top:173.25px;width:1px;height:14.15px;background:#ececec"></div>
<div style="position:absolute;left:631.5px;top:173.25px;width:1px;height:14.15px;background:#ececec"></div>
<svg style="position:absolute;left:612.7px;top:177.75px" width="5.6" height="5.6"><path d="M1 1L4.6 4.6M4.6 1L1 4.6" stroke="#111" stroke-width="1.8"/></svg>
<div style="position:absolute;left:622px;top:176.55px;width:9px;height:7.5px;background:#ff6600;border:1px solid #666"></div>
<div class="t" style="left:633.5px;top:177.55px;font-size:7.3px;color:#333;">90% =&lt; EM &lt; 100%</div>
<div style="position:absolute;left:611.6px;top:200.55px;width:152.4px;height:1px;background:#ececec"></div>
<div style="position:absolute;left:620.5px;top:187.4px;width:1px;height:14.15px;background:#ececec"></div>
<div style="position:absolute;left:631.5px;top:187.4px;width:1px;height:14.15px;background:#ececec"></div>
<svg style="position:absolute;left:612.7px;top:191.9px" width="5.6" height="5.6"><path d="M1 1L4.6 4.6M4.6 1L1 4.6" stroke="#111" stroke-width="1.8"/></svg>
<div style="position:absolute;left:622px;top:190.70000000000002px;width:9px;height:7.5px;background:#ffcc00;border:1px solid #666"></div>
<div class="t" style="left:633.5px;top:191.70000000000002px;font-size:7.3px;color:#333;">80% =&lt; EM &lt; 90%</div>
<div style="position:absolute;left:611.6px;top:214.70000000000002px;width:152.4px;height:1px;background:#ececec"></div>
<div style="position:absolute;left:620.5px;top:201.55px;width:1px;height:14.15px;background:#ececec"></div>
<div style="position:absolute;left:631.5px;top:201.55px;width:1px;height:14.15px;background:#ececec"></div>
<svg style="position:absolute;left:612.7px;top:206.05px" width="5.6" height="5.6"><path d="M1 1L4.6 4.6M4.6 1L1 4.6" stroke="#111" stroke-width="1.8"/></svg>
<div style="position:absolute;left:622px;top:204.85000000000002px;width:9px;height:7.5px;background:#ffff77;border:1px solid #666"></div>
<div class="t" style="left:633.5px;top:205.85000000000002px;font-size:7.3px;color:#333;">70% =&lt; EM &lt; 80%</div>
<div style="position:absolute;left:611.6px;top:228.85px;width:152.4px;height:1px;background:#ececec"></div>
<div style="position:absolute;left:620.5px;top:215.7px;width:1px;height:14.15px;background:#ececec"></div>
<div style="position:absolute;left:631.5px;top:215.7px;width:1px;height:14.15px;background:#ececec"></div>
<svg style="position:absolute;left:612.7px;top:220.2px" width="5.6" height="5.6"><path d="M1 1L4.6 4.6M4.6 1L1 4.6" stroke="#111" stroke-width="1.8"/></svg>
<div style="position:absolute;left:622px;top:219.0px;width:9px;height:7.5px;background:#aaee00;border:1px solid #666"></div>
<div class="t" style="left:633.5px;top:220.0px;font-size:7.3px;color:#333;">60% =&lt; EM &lt; 70%</div>
<div style="position:absolute;left:611.6px;top:243.0px;width:152.4px;height:1px;background:#ececec"></div>
<div style="position:absolute;left:620.5px;top:229.85px;width:1px;height:14.15px;background:#ececec"></div>
<div style="position:absolute;left:631.5px;top:229.85px;width:1px;height:14.15px;background:#ececec"></div>
<svg style="position:absolute;left:612.7px;top:234.35px" width="5.6" height="5.6"><path d="M1 1L4.6 4.6M4.6 1L1 4.6" stroke="#111" stroke-width="1.8"/></svg>
<div style="position:absolute;left:622px;top:233.15px;width:9px;height:7.5px;background:#22dd00;border:1px solid #666"></div>
<div class="t" style="left:633.5px;top:234.15px;font-size:7.3px;color:#333;">50% =&lt; EM &lt; 60%</div>
<div style="position:absolute;left:611.6px;top:257.15px;width:152.4px;height:1px;background:#ececec"></div>
<div style="position:absolute;left:620.5px;top:244.0px;width:1px;height:14.15px;background:#ececec"></div>
<div style="position:absolute;left:631.5px;top:244.0px;width:1px;height:14.15px;background:#ececec"></div>
<svg style="position:absolute;left:612.7px;top:248.5px" width="5.6" height="5.6"><path d="M1 1L4.6 4.6M4.6 1L1 4.6" stroke="#111" stroke-width="1.8"/></svg>
<div style="position:absolute;left:622px;top:247.3px;width:9px;height:7.5px;background:#55aa77;border:1px solid #666"></div>
<div class="t" style="left:633.5px;top:248.3px;font-size:7.3px;color:#333;">40% =&lt; EM &lt; 50%</div>
<div style="position:absolute;left:611.6px;top:271.29999999999995px;width:152.4px;height:1px;background:#ececec"></div>
<div style="position:absolute;left:620.5px;top:258.15px;width:1px;height:14.15px;background:#ececec"></div>
<div style="position:absolute;left:631.5px;top:258.15px;width:1px;height:14.15px;background:#ececec"></div>
<svg style="position:absolute;left:612.7px;top:262.65px" width="5.6" height="5.6"><path d="M1 1L4.6 4.6M4.6 1L1 4.6" stroke="#111" stroke-width="1.8"/></svg>
<div style="position:absolute;left:622px;top:261.45px;width:9px;height:7.5px;background:#aaffff;border:1px solid #666"></div>
<div class="t" style="left:633.5px;top:262.45px;font-size:7.3px;color:#333;">30% =&lt; EM &lt; 40%</div>
<div style="position:absolute;left:611.6px;top:285.45px;width:152.4px;height:1px;background:#ececec"></div>
<div style="position:absolute;left:620.5px;top:272.3px;width:1px;height:14.15px;background:#ececec"></div>
<div style="position:absolute;left:631.5px;top:272.3px;width:1px;height:14.15px;background:#ececec"></div>
<svg style="position:absolute;left:612.7px;top:276.8px" width="5.6" height="5.6"><path d="M1 1L4.6 4.6M4.6 1L1 4.6" stroke="#111" stroke-width="1.8"/></svg>
<div style="position:absolute;left:622px;top:275.6px;width:9px;height:7.5px;background:#11ddff;border:1px solid #666"></div>
<div class="t" style="left:633.5px;top:276.6px;font-size:7.3px;color:#333;">20% =&lt; EM &lt; 30%</div>
<div style="position:absolute;left:611.6px;top:299.59999999999997px;width:152.4px;height:1px;background:#ececec"></div>
<div style="position:absolute;left:620.5px;top:286.45px;width:1px;height:14.15px;background:#ececec"></div>
<div style="position:absolute;left:631.5px;top:286.45px;width:1px;height:14.15px;background:#ececec"></div>
<svg style="position:absolute;left:612.7px;top:290.95px" width="5.6" height="5.6"><path d="M1 1L4.6 4.6M4.6 1L1 4.6" stroke="#111" stroke-width="1.8"/></svg>
<div style="position:absolute;left:622px;top:289.75px;width:9px;height:7.5px;background:#2277ff;border:1px solid #666"></div>
<div class="t" style="left:633.5px;top:290.75px;font-size:7.3px;color:#333;">10% =&lt; EM &lt; 20%</div>
<div style="position:absolute;left:611.6px;top:313.75px;width:152.4px;height:1px;background:#ececec"></div>
<div style="position:absolute;left:620.5px;top:300.6px;width:1px;height:14.15px;background:#ececec"></div>
<div style="position:absolute;left:631.5px;top:300.6px;width:1px;height:14.15px;background:#ececec"></div>
<svg style="position:absolute;left:612.7px;top:305.1px" width="5.6" height="5.6"><path d="M1 1L4.6 4.6M4.6 1L1 4.6" stroke="#111" stroke-width="1.8"/></svg>
<div style="position:absolute;left:622px;top:303.90000000000003px;width:9px;height:7.5px;background:#1122ee;border:1px solid #666"></div>
<div class="t" style="left:633.5px;top:304.90000000000003px;font-size:7.3px;color:#333;">EM &lt; 10%</div>
<div style="position:absolute;left:672px;top:319.8px;width:40px;height:4px;background-image:radial-gradient(circle at 1px 1px,#cecece 0.7px,transparent 1px),radial-gradient(circle at 2.5px 2.8px,#cecece 0.7px,transparent 1px);background-size:3px 4px"></div>
<div style="position:absolute;left:609px;top:333px;width:155px;height:1.3px;background:#333"></div>
<div style="position:absolute;left:631.5px;top:325.3px;width:40px;height:8.3px;background:#e0e0e0;border:1px solid #555;border-bottom:none;border-radius:2px 2px 0 0"></div>
<div class="t" style="left:636px;top:326.7px;font-size:7.2px;color:#333;">SPT(res)</div>
<div style="position:absolute;left:609px;top:323.3px;width:22.5px;height:11px;background:#efefef;border:1.3px solid #333;border-bottom:none;border-radius:2px 2px 0 0"></div>
<div class="t" style="left:613px;top:326px;font-size:7.2px;color:#333;">Info</div>
<div style="position:absolute;left:609px;top:333px;width:1.3px;height:119px;background:#333"></div>
<div style="position:absolute;left:611px;top:335.8px;width:47px;height:11.2px;background:#f3a81a;border-radius:1px"></div>
<div class="t" style="left:620.5px;top:338.6px;font-size:7.3px;color:#333;">Probe Off</div>
<div style="position:absolute;left:609.7px;top:351.5px;width:154.3px;height:100.5px;background:#fff;border:1.3px solid #333;border-right:none"></div>
<div style="position:absolute;left:0px;top:453.5px;width:169px;height:9px;background:#f0f0f0;border-right:1px solid #555;border-bottom:1px solid #555"></div>
<div class="t" style="left:1.3px;top:454.5px;font-size:7.45px;color:#333;">Select&gt; Press Spacebar to switch overlap objects.</div>
<div style="position:absolute;left:1px;top:463px;width:701px;height:11px;background:#efefef;border:1.3px solid #444;border-radius:1px"></div>
<div style="position:absolute;left:705px;top:463px;width:51px;height:11px;background:#efefef;border:1px solid #bbb;border-radius:1px"></div>
<div class="t" style="left:706.3px;top:465.5px;font-size:6.7px;color:#333;">Snap</div>
<div style="position:absolute;left:722.5px;top:464px;width:22px;height:9px;background:#fff"></div>
<div class="t" style="left:723.5px;top:465.5px;font-size:7px;color:#333399;">0.001</div>
<div class="t" style="left:746px;top:465.5px;font-size:7.2px;color:#333;">um</div>
<div style="position:absolute;left:758px;top:466px;width:6px;height:8px;background:transparent"></div>
</body></html>
